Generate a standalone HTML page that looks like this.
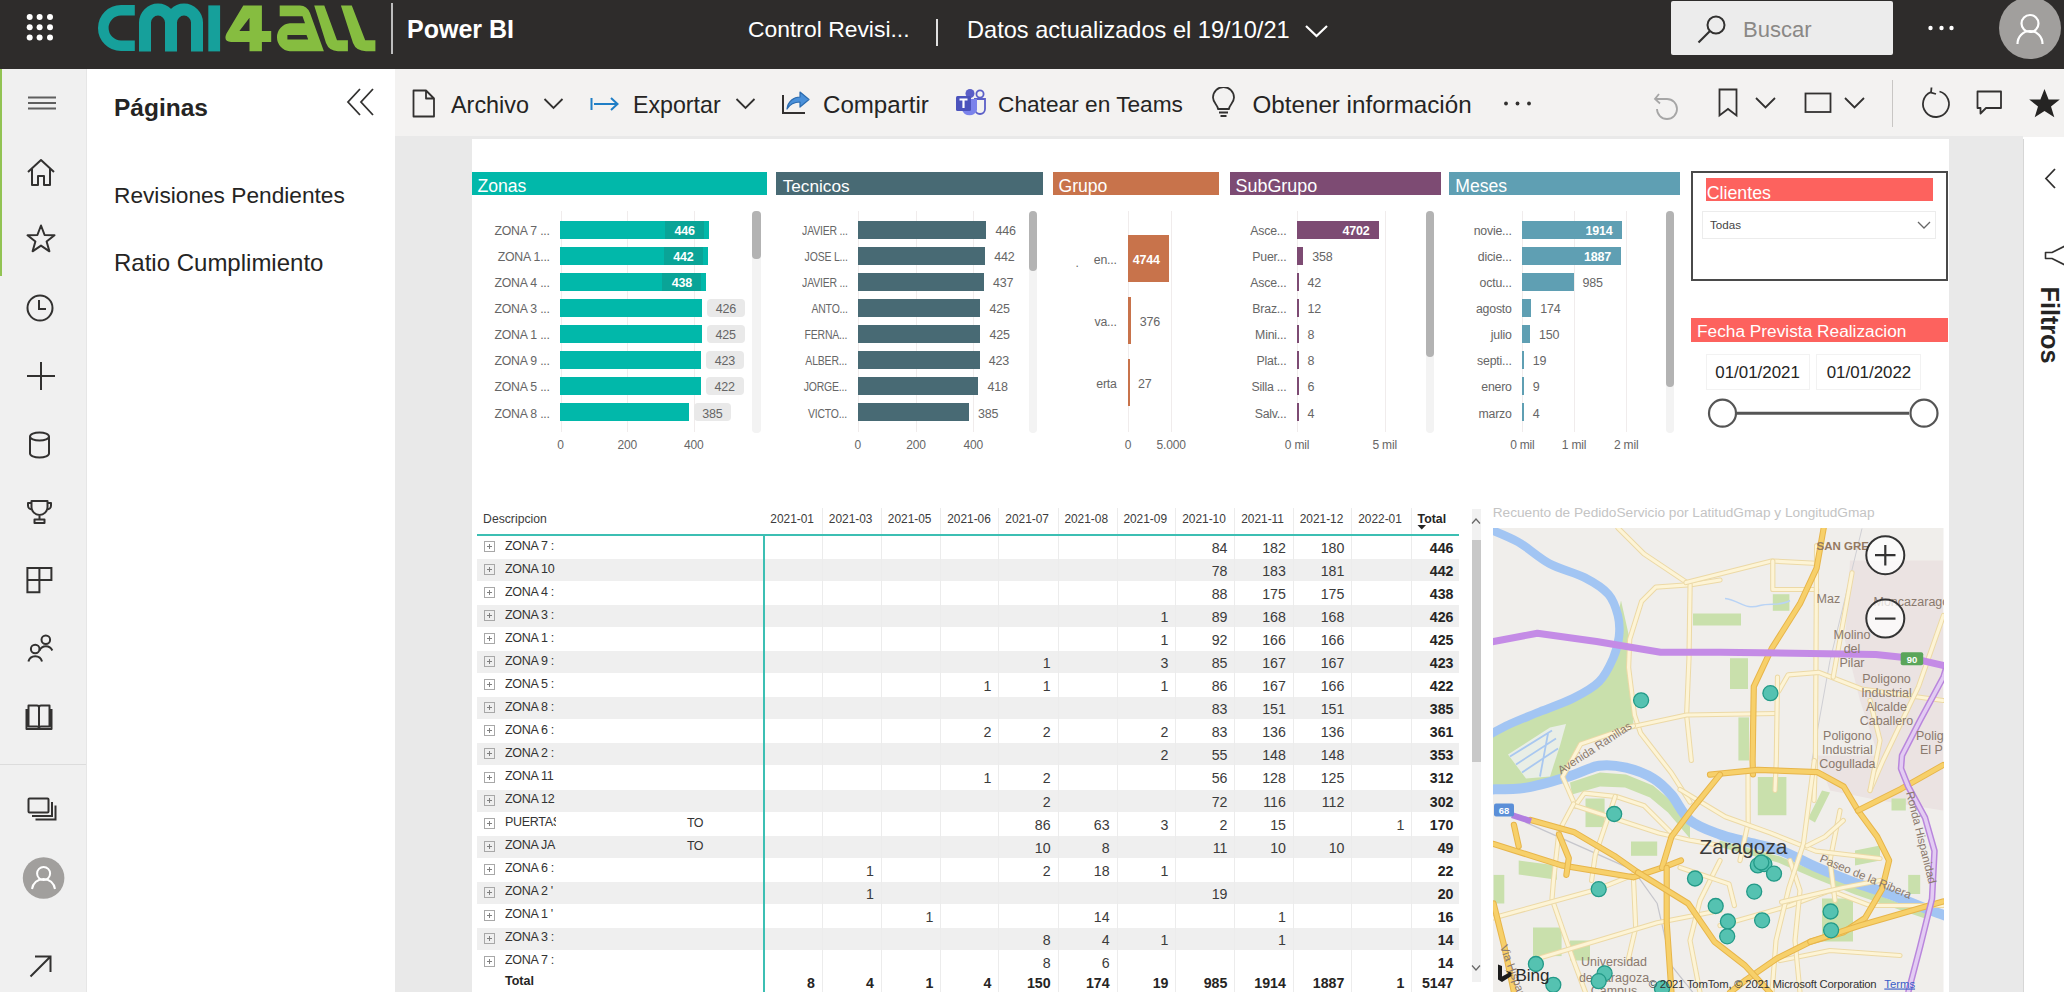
<!DOCTYPE html><html><head><meta charset="utf-8"><style>
html,body{margin:0;padding:0;width:2064px;height:992px;overflow:hidden;background:#fff;font-family:"Liberation Sans",sans-serif;}
.r{position:absolute;display:block}
.t{position:absolute;white-space:nowrap;font-family:"Liberation Sans",sans-serif;}
</style></head><body>
<div class="r" style="left:0px;top:0px;width:2064px;height:69px;background:#2e2c2b;"></div>
<svg class="r" style="left:20px;top:7px;" width="40" height="40" viewBox="0 0 40 40"><circle cx="9.7" cy="9.899999999999999" r="3" fill="#fff"/><circle cx="9.7" cy="20.2" r="3" fill="#fff"/><circle cx="9.7" cy="30.5" r="3" fill="#fff"/><circle cx="19.6" cy="9.899999999999999" r="3" fill="#fff"/><circle cx="19.6" cy="20.2" r="3" fill="#fff"/><circle cx="19.6" cy="30.5" r="3" fill="#fff"/><circle cx="30" cy="9.899999999999999" r="3" fill="#fff"/><circle cx="30" cy="20.2" r="3" fill="#fff"/><circle cx="30" cy="30.5" r="3" fill="#fff"/></svg>
<svg class="r" style="left:0px;top:0px;" width="400" height="69" viewBox="0 0 400 69">
<path d="M134.8 10.3 H121 A17.5 17.5 0 0 0 121 45.7 H134.8" fill="none" stroke="#16a09b" stroke-width="10.6"/>
<path d="M145 51.4 V22.6 A13 13 0 0 1 171 22.6 V51.4 M171 22.6 A13 13 0 0 1 197 22.6 V51.4" fill="none" stroke="#16a09b" stroke-width="12"/>
<rect x="208.3" y="5.4" width="11.8" height="46" fill="#16a09b"/>
<path d="M243.3 5.4 L261.9 5.4 L261.9 31 L271.2 31 L271.2 41.9 L261.9 41.9 L261.9 51.2 L249.5 51.2 L249.5 41.9 L231 41.9 Q223 41.5 226.5 33.5 Z M249.5 17.8 L249.5 31 L239.4 31 Z" fill="#86bd40" fill-rule="evenodd"/>
<path d="M279.7 5.4 H300 Q307 5.4 310 13 L323.9 51.2 H289.8 A14 14 0 0 1 289.8 23.3 H305 L302.5 16.3 H279.7 Z M287.4 34.9 H306.5 L308.2 39.5 H287.4 Z" fill="#86bd40" fill-rule="evenodd"/>
<path d="M314.2 5.4 L324.3 5.4 L337 40.3 L347.9 40.3 L347.9 51.2 L338 51.2 Q329 51 326 43 Z" fill="#86bd40"/>
<path d="M340.9 5.4 L351.8 5.4 L365.2 40.3 L375.4 40.3 L375.4 51.2 L366 51.2 Q356 51 353 43 Z" fill="#86bd40"/>
</svg>
<div class="r" style="left:391px;top:3px;width:2px;height:51px;background:#bdbdbd;"></div>
<div class="t" style="left:407px;top:14px;font-size:25px;line-height:30px;color:#fff;font-weight:bold;">Power BI</div>
<div class="t" style="left:748px;top:16px;font-size:22.9px;line-height:27px;color:#fff;font-weight:normal;">Control Revisi...</div>
<div class="r" style="left:936px;top:19px;width:2px;height:27px;background:#e0e0e0;"></div>
<div class="t" style="left:967px;top:16px;font-size:23.6px;line-height:28px;color:#fff;font-weight:normal;">Datos actualizados el 19/10/21</div>
<svg class="r" style="left:1303px;top:22px;" width="28" height="18" viewBox="0 0 28 18"><path d="M3 4 L13.5 14 L24 4" fill="none" stroke="#fff" stroke-width="2.2"/></svg>
<div class="r" style="left:1671px;top:1px;width:222px;height:54px;background:#ececec;border-radius:2px"></div>
<svg class="r" style="left:1694px;top:10px;" width="36" height="36" viewBox="0 0 36 36"><circle cx="22" cy="15" r="8.5" fill="none" stroke="#323130" stroke-width="2"/><path d="M16 21 L4.5 32.5" stroke="#323130" stroke-width="2.2"/></svg>
<div class="t" style="left:1743px;top:17px;font-size:22px;line-height:26px;color:#8a8886;font-weight:normal;">Buscar</div>
<svg class="r" style="left:1920px;top:20px;" width="40" height="16" viewBox="0 0 40 16"><circle cx="10.5" cy="8" r="2.2" fill="#fff"/><circle cx="21.5" cy="8" r="2.2" fill="#fff"/><circle cx="31.5" cy="8" r="2.2" fill="#fff"/></svg>
<svg class="r" style="left:1998px;top:-4px;" width="66" height="66" viewBox="0 0 66 66"><circle cx="32" cy="32" r="31" fill="#a19f9d"/><circle cx="32" cy="27.5" r="8.5" fill="none" stroke="#fff" stroke-width="2.2"/><path d="M19.5 48 A12.5 13 0 0 1 44.5 48" fill="none" stroke="#fff" stroke-width="2.2"/></svg>
<div class="r" style="left:0px;top:69px;width:86px;height:923px;background:#f0f0f0;"></div>
<div class="r" style="left:0px;top:69px;width:1.5px;height:207px;background:#92c353;"></div>
<div class="r" style="left:86px;top:69px;width:1px;height:923px;background:#e6e6e6;"></div>
<svg class="r" style="left:26px;top:94px;" width="32" height="18" viewBox="0 0 32 18"><path d="M2 3.5 H30 M2 9 H30 M2 14.5 H30" stroke="#5f5f5f" stroke-width="1.8"/></svg>
<svg class="r" style="left:24px;top:156px;" width="34" height="34" viewBox="0 0 34 34"><path d="M4 16 L17 4 L30 16 M8 12.5 V29 H14 V20 H20 V29 H26 V12.5" fill="none" stroke="#323130" stroke-width="2" stroke-linejoin="round"/></svg>
<svg class="r" style="left:24px;top:222px;" width="34" height="34" viewBox="0 0 34 34"><path d="M17 3.5 L20.6 13 L30.5 13.3 L22.6 19.5 L25.4 29.3 L17 23.6 L8.6 29.3 L11.4 19.5 L3.5 13.3 L13.4 13 Z" fill="none" stroke="#323130" stroke-width="2" stroke-linejoin="round"/></svg>
<svg class="r" style="left:24px;top:291px;" width="34" height="34" viewBox="0 0 34 34"><circle cx="16" cy="17" r="12.5" fill="none" stroke="#323130" stroke-width="2"/><path d="M15 9 V18 H22" fill="none" stroke="#323130" stroke-width="2"/></svg>
<svg class="r" style="left:24px;top:359px;" width="34" height="34" viewBox="0 0 34 34"><path d="M17 3 V31 M3 17 H31" fill="none" stroke="#323130" stroke-width="2"/></svg>
<svg class="r" style="left:24px;top:429px;" width="34" height="34" viewBox="0 0 34 34"><ellipse cx="15.5" cy="7.5" rx="9.5" ry="4" fill="none" stroke="#323130" stroke-width="2"/><path d="M6 7.5 V24.5 A9.5 4 0 0 0 25 24.5 V7.5" fill="none" stroke="#323130" stroke-width="2"/></svg>
<svg class="r" style="left:24px;top:494px;" width="34" height="34" viewBox="0 0 34 34"><path d="M7.5 7 H23.5 V13 A8 8 0 0 1 7.5 13 Z M7.5 9 H4 V11.5 A4 4 0 0 0 8 15.5 M23.5 9 H27 V11.5 A4 4 0 0 1 23 15.5 M15.5 21 V25 M10.5 25.5 H20.5 V29 H10.5 Z" fill="none" stroke="#323130" stroke-width="2" stroke-width="1.8" stroke-linejoin="round"/></svg>
<svg class="r" style="left:24px;top:563px;" width="34" height="34" viewBox="0 0 34 34"><path d="M3.4 5 H15.4 V17 H3.4 Z M15.4 5 H27.4 V17 H15.4 M3.4 17 V29.3 H15.4 V17" fill="none" stroke="#323130" stroke-width="2" stroke-width="1.9"/></svg>
<svg class="r" style="left:24px;top:631px;" width="34" height="34" viewBox="0 0 34 34"><circle cx="21.8" cy="8.8" r="4.3" fill="none" stroke="#323130" stroke-width="2" stroke-width="1.8"/><path d="M15.5 19.5 A7 7 0 0 1 28.3 19.5" fill="none" stroke="#323130" stroke-width="2" stroke-width="1.8"/><circle cx="11.2" cy="18" r="4.3" fill="none" stroke="#323130" stroke-width="2" stroke-width="1.8"/><path d="M4.4 30.5 A7 7 0 0 1 18 30.5" fill="none" stroke="#323130" stroke-width="2" stroke-width="1.8"/></svg>
<svg class="r" style="left:24px;top:700px;" width="34" height="34" viewBox="0 0 34 34"><path d="M4.5 5.5 H13 A2 2 0 0 1 15 7.5 V28 A2 2 0 0 0 13 26.5 H4.5 Z M25.5 5.5 H17 A2 2 0 0 0 15 7.5 V28 A2 2 0 0 1 17 26.5 H25.5 Z M2.5 9 V29 H27.5 V9" fill="none" stroke="#323130" stroke-width="2" stroke-width="1.8" stroke-linejoin="round"/></svg>
<div class="r" style="left:0px;top:764px;width:86px;height:1px;background:#dcdcdc;"></div>
<svg class="r" style="left:24px;top:792px;" width="36" height="34" viewBox="0 0 36 34"><rect x="4.5" y="6.5" width="20" height="14" rx="1" fill="none" stroke="#323130" stroke-width="2" stroke-width="1.8"/><path d="M8 24 H28 V10 M11.5 27.5 H31.5 V13.5" fill="none" stroke="#323130" stroke-width="2" stroke-width="1.8"/></svg>
<svg class="r" style="left:22px;top:857px;" width="44" height="44" viewBox="0 0 44 44"><circle cx="21.6" cy="21" r="20.8" fill="#a19f9d"/><circle cx="21.6" cy="16.5" r="6.5" fill="none" stroke="#fff" stroke-width="2"/><path d="M10 32 A11.6 11.6 0 0 1 33 32" fill="none" stroke="#fff" stroke-width="2"/></svg>
<svg class="r" style="left:24px;top:950px;" width="34" height="34" viewBox="0 0 34 34"><path d="M6.5 26.5 L26.5 6.5 M11 6.5 H26.5 V22" fill="none" stroke="#323130" stroke-width="2"/></svg>
<div class="r" style="left:87px;top:69px;width:308px;height:923px;background:#ffffff;"></div>
<div class="r" style="left:395px;top:69px;width:1px;height:923px;background:#dcdcdc;"></div>
<div class="t" style="left:114px;top:93px;font-size:24.5px;line-height:29px;color:#252423;font-weight:bold;">Páginas</div>
<svg class="r" style="left:342px;top:86px;" width="40" height="34" viewBox="0 0 40 34"><path d="M18 3 L6 16 L18 29 M31 3 L19 16 L31 29" fill="none" stroke="#323130" stroke-width="1.8"/></svg>
<div class="t" style="left:114px;top:182px;font-size:22.7px;line-height:27px;color:#252423;font-weight:normal;">Revisiones Pendientes</div>
<div class="t" style="left:114px;top:248px;font-size:24.0px;line-height:29px;color:#252423;font-weight:normal;">Ratio Cumplimiento</div>
<div class="r" style="left:395px;top:69px;width:1669px;height:67.5px;background:#f3f2f1;"></div>
<div class="r" style="left:395px;top:136px;width:1628px;height:856px;background:#e9e9e9;"></div>
<svg class="r" style="left:410px;top:88px;" width="28" height="32" viewBox="0 0 28 32"><path d="M3.5 2.5 H16 L24 10.5 V28.5 H3.5 Z M16 2.5 V10.5 H24" fill="none" stroke="#323130" stroke-width="1.8" stroke-linejoin="round"/></svg>
<div class="t" style="left:451px;top:91px;font-size:23.4px;line-height:28px;color:#252423;font-weight:normal;">Archivo</div>
<svg class="r" style="left:542px;top:96px;" width="24" height="16" viewBox="0 0 24 16"><path d="M2.5 3 L11.5 12 L20.5 3" fill="none" stroke="#323130" stroke-width="1.8"/></svg>
<svg class="r" style="left:588px;top:94px;" width="34" height="20" viewBox="0 0 34 20"><path d="M3.5 4 V16 M6 10 H29 M23 4 L29.5 10 L23 16" fill="none" stroke="#1f7ec6" stroke-width="2"/></svg>
<div class="t" style="left:633px;top:91px;font-size:23.2px;line-height:28px;color:#252423;font-weight:normal;">Exportar</div>
<svg class="r" style="left:734px;top:96px;" width="24" height="16" viewBox="0 0 24 16"><path d="M2.5 3 L11.5 12 L20.5 3" fill="none" stroke="#323130" stroke-width="1.8"/></svg>
<svg class="r" style="left:780px;top:87px;" width="34" height="30" viewBox="0 0 34 30"><path d="M3 8 V26 H25" fill="none" stroke="#323130" stroke-width="2"/><path d="M7 22 C8 14 14 10 20 10 V5 L29 12.5 L20 20 V15 C15 15 10 17 7 22 Z" fill="#4a90d9" stroke="#2b6cb0" stroke-width="1.2" stroke-linejoin="round"/></svg>
<div class="t" style="left:823px;top:90px;font-size:24.1px;line-height:29px;color:#252423;font-weight:normal;">Compartir</div>
<svg class="r" style="left:953px;top:87px;" width="36" height="32" viewBox="0 0 36 32"><circle cx="27" cy="7" r="3.6" fill="none" stroke="#5b5fc7" stroke-width="1.8"/><path d="M21 12 H32 V22 A5 5 0 0 1 22 22" fill="none" stroke="#5b5fc7" stroke-width="1.8"/><circle cx="17" cy="6.5" r="4.5" fill="#5b5fc7"/><path d="M9 12 H24 V23 A8 8 0 0 1 9 23 Z" fill="#7b83eb"/><rect x="3" y="9" width="15" height="15" rx="1.5" fill="#4b53bc"/><path d="M6.5 12.5 H14.5 M10.5 12.5 V21" stroke="#fff" stroke-width="2.2"/></svg>
<div class="t" style="left:998px;top:91px;font-size:22.7px;line-height:27px;color:#252423;font-weight:normal;">Chatear en Teams</div>
<svg class="r" style="left:1208px;top:87px;" width="32" height="32" viewBox="0 0 32 32"><path d="M10 22 C10 18 5 16 5 10.5 A10.5 10.5 0 0 1 26 10.5 C26 16 21 18 21 22 Z M11 25.5 H20 M12.5 29 H18.5" fill="none" stroke="#323130" stroke-width="1.8" stroke-linejoin="round"/></svg>
<div class="t" style="left:1252.5px;top:90px;font-size:24.2px;line-height:29px;color:#252423;font-weight:normal;">Obtener información</div>
<svg class="r" style="left:1500px;top:96px;" width="36" height="16" viewBox="0 0 36 16"><circle cx="6" cy="7.5" r="1.9" fill="#323130"/><circle cx="17.5" cy="7.5" r="1.9" fill="#323130"/><circle cx="29" cy="7.5" r="1.9" fill="#323130"/></svg>
<svg class="r" style="left:1650px;top:88px;" width="34" height="32" viewBox="0 0 34 32"><path d="M9 6 L5 11 L10 15.5 M5.5 11 H17 A10 10 0 1 1 7 21" fill="none" stroke="#a6a6a6" stroke-width="1.8"/></svg>
<svg class="r" style="left:1715px;top:86px;" width="26" height="34" viewBox="0 0 26 34"><path d="M4.5 3.5 H21.5 V29.5 L13 23 L4.5 29.5 Z" fill="none" stroke="#323130" stroke-width="1.8" stroke-width="2.2" stroke-linejoin="miter"/></svg>
<svg class="r" style="left:1753px;top:94px;" width="26" height="18" viewBox="0 0 26 18"><path d="M3 4 L12.5 13.5 L22 4" fill="none" stroke="#323130" stroke-width="1.8"/></svg>
<svg class="r" style="left:1802px;top:90px;" width="32" height="26" viewBox="0 0 32 26"><rect x="3.5" y="3.5" width="25" height="18.5" fill="none" stroke="#323130" stroke-width="1.8" stroke-width="2.2"/></svg>
<svg class="r" style="left:1842px;top:94px;" width="26" height="18" viewBox="0 0 26 18"><path d="M3 4 L12.5 13.5 L22 4" fill="none" stroke="#323130" stroke-width="1.8"/></svg>
<div class="r" style="left:1892px;top:80px;width:1px;height:47px;background:#c8c6c4;"></div>
<svg class="r" style="left:1918px;top:86px;" width="34" height="34" viewBox="0 0 34 34"><path d="M13 6 A13 13 0 1 0 21.5 5.5 M13.5 1.5 L13 6.5 L18 8" fill="none" stroke="#323130" stroke-width="1.8" stroke-width="2"/></svg>
<svg class="r" style="left:1974px;top:88px;" width="32" height="30" viewBox="0 0 32 30"><path d="M3.5 3.5 H27 V20 H12 L6.5 25.5 V20 H3.5 Z" fill="none" stroke="#323130" stroke-width="1.8" stroke-linejoin="round"/></svg>
<svg class="r" style="left:2027px;top:87px;" width="37" height="32" viewBox="0 0 37 32"><path d="M17.5 2 L21.6 12.4 L32.8 12.6 L24 19.5 L27.3 30.3 L17.5 24 L7.7 30.3 L11 19.5 L2.2 12.6 L13.4 12.4 Z" fill="#252423"/></svg>
<div class="r" style="left:472px;top:138.5px;width:1476.5px;height:854px;background:#ffffff;"></div>
<div class="r" style="left:2023px;top:138.5px;width:41px;height:854px;background:#ffffff;"></div>
<div class="r" style="left:2022.5px;top:138.5px;width:1px;height:854px;background:#d6d6d6;"></div>
<svg class="r" style="left:2040px;top:165px;" width="22" height="28" viewBox="0 0 22 28"><path d="M15 4 L6 13.5 L15 23" fill="none" stroke="#323130" stroke-width="1.8"/></svg>
<svg class="r" style="left:2040px;top:240px;" width="24" height="30" viewBox="0 0 24 30"><path d="M25 6 L12 12.5 H5.5 V18.5 H12 L25 25" fill="none" stroke="#323130" stroke-width="1.6" stroke-linejoin="round"/></svg>
<div class="t" style="left:2050px;top:324.5px;transform:translate(-50%,-50%) rotate(90deg);font-size:25.2px;font-weight:bold;color:#252423;line-height:28px">Filtros</div>
<div class="r" style="left:472px;top:172px;width:295px;height:23px;background:#01b8aa;"></div>
<div class="t" style="left:477.4px;top:176px;font-size:17.6px;line-height:21px;color:#ffffff;font-weight:normal;">Zonas</div>
<div class="r" style="left:561px;top:211px;width:1px;height:221px;background:#f0ecec;"></div>
<div class="r" style="left:627px;top:211px;width:1px;height:221px;background:#f0ecec;"></div>
<div class="r" style="left:694px;top:211px;width:1px;height:221px;background:#f0ecec;"></div>
<div class="r" style="left:560.4px;top:220.5px;width:148.741px;height:18px;background:#01b8aa;"></div>
<div class="t" style="right:1514.2px;top:224px;font-size:12.3px;line-height:15px;color:#666666;font-weight:normal;text-align:right;letter-spacing:-0.2px;">ZONA 7 ...</div>
<div class="r" style="left:665.141px;top:220.5px;width:39px;height:18px;background:#0aa497;"></div>
<div class="t" style="left:584.641px;width:200px;text-align:center;top:224px;font-size:12.5px;line-height:15px;color:#ffffff;font-weight:bold;letter-spacing:-0.2px;">446</div>
<div class="r" style="left:560.4px;top:246.6px;width:147.407px;height:18px;background:#01b8aa;"></div>
<div class="t" style="right:1514.2px;top:250px;font-size:12.3px;line-height:15px;color:#666666;font-weight:normal;text-align:right;letter-spacing:-0.2px;">ZONA 1...</div>
<div class="r" style="left:663.807px;top:246.6px;width:39px;height:18px;background:#0aa497;"></div>
<div class="t" style="left:583.307px;width:200px;text-align:center;top:250px;font-size:12.5px;line-height:15px;color:#ffffff;font-weight:bold;letter-spacing:-0.2px;">442</div>
<div class="r" style="left:560.4px;top:272.7px;width:146.073px;height:18px;background:#01b8aa;"></div>
<div class="t" style="right:1514.2px;top:276px;font-size:12.3px;line-height:15px;color:#666666;font-weight:normal;text-align:right;letter-spacing:-0.2px;">ZONA 4 ...</div>
<div class="r" style="left:662.473px;top:272.7px;width:39px;height:18px;background:#0aa497;"></div>
<div class="t" style="left:581.973px;width:200px;text-align:center;top:276px;font-size:12.5px;line-height:15px;color:#ffffff;font-weight:bold;letter-spacing:-0.2px;">438</div>
<div class="r" style="left:560.4px;top:298.8px;width:142.071px;height:18px;background:#01b8aa;"></div>
<div class="t" style="right:1514.2px;top:302px;font-size:12.3px;line-height:15px;color:#666666;font-weight:normal;text-align:right;letter-spacing:-0.2px;">ZONA 3 ...</div>
<div class="r" style="left:707.471px;top:298.8px;width:37.5px;height:18px;background:#e9e9e9;border-radius:4px"></div>
<div class="t" style="left:625.971px;width:200px;text-align:center;top:302px;font-size:12.5px;line-height:15px;color:#666666;font-weight:normal;letter-spacing:-0.2px;">426</div>
<div class="r" style="left:560.4px;top:324.9px;width:141.7375px;height:18px;background:#01b8aa;"></div>
<div class="t" style="right:1514.2px;top:328px;font-size:12.3px;line-height:15px;color:#666666;font-weight:normal;text-align:right;letter-spacing:-0.2px;">ZONA 1 ...</div>
<div class="r" style="left:707.1375px;top:324.9px;width:37.5px;height:18px;background:#e9e9e9;border-radius:4px"></div>
<div class="t" style="left:625.6375px;width:200px;text-align:center;top:328px;font-size:12.5px;line-height:15px;color:#666666;font-weight:normal;letter-spacing:-0.2px;">425</div>
<div class="r" style="left:560.4px;top:351.0px;width:141.0705px;height:18px;background:#01b8aa;"></div>
<div class="t" style="right:1514.2px;top:354px;font-size:12.3px;line-height:15px;color:#666666;font-weight:normal;text-align:right;letter-spacing:-0.2px;">ZONA 9 ...</div>
<div class="r" style="left:706.4705px;top:351.0px;width:37.5px;height:18px;background:#e9e9e9;border-radius:4px"></div>
<div class="t" style="left:624.9705px;width:200px;text-align:center;top:354px;font-size:12.5px;line-height:15px;color:#666666;font-weight:normal;letter-spacing:-0.2px;">423</div>
<div class="r" style="left:560.4px;top:377.1px;width:140.737px;height:18px;background:#01b8aa;"></div>
<div class="t" style="right:1514.2px;top:380px;font-size:12.3px;line-height:15px;color:#666666;font-weight:normal;text-align:right;letter-spacing:-0.2px;">ZONA 5 ...</div>
<div class="r" style="left:706.137px;top:377.1px;width:37.5px;height:18px;background:#e9e9e9;border-radius:4px"></div>
<div class="t" style="left:624.637px;width:200px;text-align:center;top:380px;font-size:12.5px;line-height:15px;color:#666666;font-weight:normal;letter-spacing:-0.2px;">422</div>
<div class="r" style="left:560.4px;top:403.20000000000005px;width:128.3975px;height:18px;background:#01b8aa;"></div>
<div class="t" style="right:1514.2px;top:407px;font-size:12.3px;line-height:15px;color:#666666;font-weight:normal;text-align:right;letter-spacing:-0.2px;">ZONA 8 ...</div>
<div class="r" style="left:693.7975px;top:403.20000000000005px;width:37.5px;height:18px;background:#e9e9e9;border-radius:4px"></div>
<div class="t" style="left:612.2975px;width:200px;text-align:center;top:407px;font-size:12.5px;line-height:15px;color:#666666;font-weight:normal;letter-spacing:-0.2px;">385</div>
<div class="t" style="left:460.4px;width:200px;text-align:center;top:438px;font-size:12px;line-height:14px;color:#666666;font-weight:normal;letter-spacing:-0.2px;">0</div>
<div class="t" style="left:527.3px;width:200px;text-align:center;top:438px;font-size:12px;line-height:14px;color:#666666;font-weight:normal;letter-spacing:-0.2px;">200</div>
<div class="t" style="left:593.8px;width:200px;text-align:center;top:438px;font-size:12px;line-height:14px;color:#666666;font-weight:normal;letter-spacing:-0.2px;">400</div>
<div class="r" style="left:752px;top:211px;width:9px;height:222px;background:#f3f3f3;border-radius:4px"></div>
<div class="r" style="left:752px;top:211px;width:9px;height:48px;background:#b3b3b3;border-radius:4px"></div>
<div class="r" style="left:776px;top:172px;width:267px;height:23px;background:#486a74;"></div>
<div class="t" style="left:782.7px;top:176px;font-size:17.2px;line-height:21px;color:#ffffff;font-weight:normal;">Tecnicos</div>
<div class="r" style="left:858px;top:211px;width:1px;height:221px;background:#f0ecec;"></div>
<div class="r" style="left:916px;top:211px;width:1px;height:221px;background:#f0ecec;"></div>
<div class="r" style="left:973px;top:211px;width:1px;height:221px;background:#f0ecec;"></div>
<div class="r" style="left:857.7px;top:220.5px;width:128.8048px;height:18px;background:#486a74;"></div>
<div class="t" style="right:1216.6px;top:224px;font-size:12.3px;line-height:15px;color:#666666;font-weight:normal;text-align:right;letter-spacing:-0.2px;transform:scaleX(0.85);transform-origin:right center;">JAVIER ...</div>
<div class="t" style="left:995.5048px;top:224px;font-size:12.5px;line-height:15px;color:#666666;font-weight:normal;letter-spacing:-0.2px;">446</div>
<div class="r" style="left:857.7px;top:246.6px;width:127.6496px;height:18px;background:#486a74;"></div>
<div class="t" style="right:1216.6px;top:250px;font-size:12.3px;line-height:15px;color:#666666;font-weight:normal;text-align:right;letter-spacing:-0.2px;transform:scaleX(0.85);transform-origin:right center;">JOSE L...</div>
<div class="t" style="left:994.3496px;top:250px;font-size:12.5px;line-height:15px;color:#666666;font-weight:normal;letter-spacing:-0.2px;">442</div>
<div class="r" style="left:857.7px;top:272.7px;width:126.2056px;height:18px;background:#486a74;"></div>
<div class="t" style="right:1216.6px;top:276px;font-size:12.3px;line-height:15px;color:#666666;font-weight:normal;text-align:right;letter-spacing:-0.2px;transform:scaleX(0.85);transform-origin:right center;">JAVIER ...</div>
<div class="t" style="left:992.9056px;top:276px;font-size:12.5px;line-height:15px;color:#666666;font-weight:normal;letter-spacing:-0.2px;">437</div>
<div class="r" style="left:857.7px;top:298.8px;width:122.74px;height:18px;background:#486a74;"></div>
<div class="t" style="right:1216.6px;top:302px;font-size:12.3px;line-height:15px;color:#666666;font-weight:normal;text-align:right;letter-spacing:-0.2px;transform:scaleX(0.85);transform-origin:right center;">ANTO...</div>
<div class="t" style="left:989.44px;top:302px;font-size:12.5px;line-height:15px;color:#666666;font-weight:normal;letter-spacing:-0.2px;">425</div>
<div class="r" style="left:857.7px;top:324.9px;width:122.74px;height:18px;background:#486a74;"></div>
<div class="t" style="right:1216.6px;top:328px;font-size:12.3px;line-height:15px;color:#666666;font-weight:normal;text-align:right;letter-spacing:-0.2px;transform:scaleX(0.85);transform-origin:right center;">FERNA...</div>
<div class="t" style="left:989.44px;top:328px;font-size:12.5px;line-height:15px;color:#666666;font-weight:normal;letter-spacing:-0.2px;">425</div>
<div class="r" style="left:857.7px;top:351.0px;width:122.1624px;height:18px;background:#486a74;"></div>
<div class="t" style="right:1216.6px;top:354px;font-size:12.3px;line-height:15px;color:#666666;font-weight:normal;text-align:right;letter-spacing:-0.2px;transform:scaleX(0.85);transform-origin:right center;">ALBER...</div>
<div class="t" style="left:988.8624000000001px;top:354px;font-size:12.5px;line-height:15px;color:#666666;font-weight:normal;letter-spacing:-0.2px;">423</div>
<div class="r" style="left:857.7px;top:377.1px;width:120.7184px;height:18px;background:#486a74;"></div>
<div class="t" style="right:1216.6px;top:380px;font-size:12.3px;line-height:15px;color:#666666;font-weight:normal;text-align:right;letter-spacing:-0.2px;transform:scaleX(0.85);transform-origin:right center;">JORGE...</div>
<div class="t" style="left:987.4184px;top:380px;font-size:12.5px;line-height:15px;color:#666666;font-weight:normal;letter-spacing:-0.2px;">418</div>
<div class="r" style="left:857.7px;top:403.20000000000005px;width:111.188px;height:18px;background:#486a74;"></div>
<div class="t" style="right:1216.6px;top:407px;font-size:12.3px;line-height:15px;color:#666666;font-weight:normal;text-align:right;letter-spacing:-0.2px;transform:scaleX(0.85);transform-origin:right center;">VICTO...</div>
<div class="t" style="left:977.888px;top:407px;font-size:12.5px;line-height:15px;color:#666666;font-weight:normal;letter-spacing:-0.2px;">385</div>
<div class="t" style="left:757.7px;width:200px;text-align:center;top:438px;font-size:12px;line-height:14px;color:#666666;font-weight:normal;letter-spacing:-0.2px;">0</div>
<div class="t" style="left:816px;width:200px;text-align:center;top:438px;font-size:12px;line-height:14px;color:#666666;font-weight:normal;letter-spacing:-0.2px;">200</div>
<div class="t" style="left:873.2px;width:200px;text-align:center;top:438px;font-size:12px;line-height:14px;color:#666666;font-weight:normal;letter-spacing:-0.2px;">400</div>
<div class="r" style="left:1029px;top:211px;width:8px;height:222px;background:#f3f3f3;border-radius:4px"></div>
<div class="r" style="left:1029px;top:211px;width:8px;height:60px;background:#b3b3b3;border-radius:4px"></div>
<div class="r" style="left:1053px;top:172px;width:166px;height:23px;background:#c8734b;"></div>
<div class="t" style="left:1058.5px;top:176px;font-size:17.6px;line-height:21px;color:#ffffff;font-weight:normal;">Grupo</div>
<div class="r" style="left:1128px;top:211px;width:1px;height:221px;background:#f0ecec;"></div>
<div class="r" style="left:1171px;top:211px;width:1px;height:221px;background:#f0ecec;"></div>
<div class="r" style="left:1128px;top:235.2px;width:40.89328px;height:46.5px;background:#c8734b;"></div>
<div class="t" style="right:947.3px;top:253px;font-size:12.3px;line-height:15px;color:#666666;font-weight:normal;text-align:right;letter-spacing:-0.2px;">en...</div>
<div class="t" style="left:1132.7px;top:253px;font-size:12.5px;line-height:15px;color:#ffffff;font-weight:bold;letter-spacing:-0.2px;">4744</div>
<div class="r" style="left:1128px;top:297px;width:3.2411199999999996px;height:46.5px;background:#c8734b;"></div>
<div class="t" style="right:947.3px;top:315px;font-size:12.3px;line-height:15px;color:#666666;font-weight:normal;text-align:right;letter-spacing:-0.2px;">va...</div>
<div class="t" style="left:1139.74112px;top:315px;font-size:12.5px;line-height:15px;color:#666666;font-weight:normal;letter-spacing:-0.2px;">376</div>
<div class="r" style="left:1128px;top:359px;width:1.5px;height:46.5px;background:#c8734b;"></div>
<div class="t" style="right:947.3px;top:377px;font-size:12.3px;line-height:15px;color:#666666;font-weight:normal;text-align:right;letter-spacing:-0.2px;">erta</div>
<div class="t" style="left:1138.0px;top:377px;font-size:12.5px;line-height:15px;color:#666666;font-weight:normal;letter-spacing:-0.2px;">27</div>
<div class="t" style="left:1075.5px;top:256px;font-size:12px;line-height:14px;color:#666666;font-weight:normal;">.</div>
<div class="t" style="left:1028px;width:200px;text-align:center;top:438px;font-size:12px;line-height:14px;color:#666666;font-weight:normal;letter-spacing:-0.2px;">0</div>
<div class="t" style="left:1071.1px;width:200px;text-align:center;top:438px;font-size:12px;line-height:14px;color:#666666;font-weight:normal;letter-spacing:-0.2px;">5.000</div>
<div class="r" style="left:1229.5px;top:172px;width:211.5px;height:23px;background:#7d4b73;"></div>
<div class="t" style="left:1235.6px;top:176px;font-size:17.9px;line-height:21px;color:#ffffff;font-weight:normal;">SubGrupo</div>
<div class="r" style="left:1297px;top:211px;width:1px;height:221px;background:#f0ecec;"></div>
<div class="r" style="left:1385px;top:211px;width:1px;height:221px;background:#f0ecec;"></div>
<div class="r" style="left:1297px;top:220.5px;width:82.00288px;height:18px;background:#7d4b73;"></div>
<div class="t" style="right:777.5px;top:224px;font-size:12.3px;line-height:15px;color:#666666;font-weight:normal;text-align:right;letter-spacing:-0.2px;">Asce...</div>
<div class="t" style="right:694.49712px;top:224px;font-size:12.5px;line-height:15px;color:#ffffff;font-weight:bold;text-align:right;letter-spacing:-0.2px;">4702</div>
<div class="r" style="left:1297px;top:246.6px;width:6.24352px;height:18px;background:#7d4b73;"></div>
<div class="t" style="right:777.5px;top:250px;font-size:12.3px;line-height:15px;color:#666666;font-weight:normal;text-align:right;letter-spacing:-0.2px;">Puer...</div>
<div class="t" style="left:1312.24352px;top:250px;font-size:12.5px;line-height:15px;color:#666666;font-weight:normal;letter-spacing:-0.2px;">358</div>
<div class="r" style="left:1297px;top:272.7px;width:1.5px;height:18px;background:#7d4b73;"></div>
<div class="t" style="right:777.5px;top:276px;font-size:12.3px;line-height:15px;color:#666666;font-weight:normal;text-align:right;letter-spacing:-0.2px;">Asce...</div>
<div class="t" style="left:1307.5px;top:276px;font-size:12.5px;line-height:15px;color:#666666;font-weight:normal;letter-spacing:-0.2px;">42</div>
<div class="r" style="left:1297px;top:298.8px;width:1.5px;height:18px;background:#7d4b73;"></div>
<div class="t" style="right:777.5px;top:302px;font-size:12.3px;line-height:15px;color:#666666;font-weight:normal;text-align:right;letter-spacing:-0.2px;">Braz...</div>
<div class="t" style="left:1307.5px;top:302px;font-size:12.5px;line-height:15px;color:#666666;font-weight:normal;letter-spacing:-0.2px;">12</div>
<div class="r" style="left:1297px;top:324.9px;width:1.5px;height:18px;background:#7d4b73;"></div>
<div class="t" style="right:777.5px;top:328px;font-size:12.3px;line-height:15px;color:#666666;font-weight:normal;text-align:right;letter-spacing:-0.2px;">Mini...</div>
<div class="t" style="left:1307.5px;top:328px;font-size:12.5px;line-height:15px;color:#666666;font-weight:normal;letter-spacing:-0.2px;">8</div>
<div class="r" style="left:1297px;top:351.0px;width:1.5px;height:18px;background:#7d4b73;"></div>
<div class="t" style="right:777.5px;top:354px;font-size:12.3px;line-height:15px;color:#666666;font-weight:normal;text-align:right;letter-spacing:-0.2px;">Plat...</div>
<div class="t" style="left:1307.5px;top:354px;font-size:12.5px;line-height:15px;color:#666666;font-weight:normal;letter-spacing:-0.2px;">8</div>
<div class="r" style="left:1297px;top:377.1px;width:1.5px;height:18px;background:#7d4b73;"></div>
<div class="t" style="right:777.5px;top:380px;font-size:12.3px;line-height:15px;color:#666666;font-weight:normal;text-align:right;letter-spacing:-0.2px;">Silla ...</div>
<div class="t" style="left:1307.5px;top:380px;font-size:12.5px;line-height:15px;color:#666666;font-weight:normal;letter-spacing:-0.2px;">6</div>
<div class="r" style="left:1297px;top:403.20000000000005px;width:1.5px;height:18px;background:#7d4b73;"></div>
<div class="t" style="right:777.5px;top:407px;font-size:12.3px;line-height:15px;color:#666666;font-weight:normal;text-align:right;letter-spacing:-0.2px;">Salv...</div>
<div class="t" style="left:1307.5px;top:407px;font-size:12.5px;line-height:15px;color:#666666;font-weight:normal;letter-spacing:-0.2px;">4</div>
<div class="t" style="left:1197px;width:200px;text-align:center;top:438px;font-size:12px;line-height:14px;color:#666666;font-weight:normal;letter-spacing:-0.2px;">0 mil</div>
<div class="t" style="left:1284.7px;width:200px;text-align:center;top:438px;font-size:12px;line-height:14px;color:#666666;font-weight:normal;letter-spacing:-0.2px;">5 mil</div>
<div class="r" style="left:1426px;top:211px;width:8px;height:222px;background:#f3f3f3;border-radius:4px"></div>
<div class="r" style="left:1426px;top:211px;width:8px;height:146px;background:#b3b3b3;border-radius:4px"></div>
<div class="r" style="left:1449.3px;top:172px;width:231.20000000000005px;height:23px;background:#5f9fb3;"></div>
<div class="t" style="left:1455.3px;top:176px;font-size:17.6px;line-height:21px;color:#ffffff;font-weight:normal;">Meses</div>
<div class="r" style="left:1522px;top:211px;width:1px;height:221px;background:#f0ecec;"></div>
<div class="r" style="left:1574px;top:211px;width:1px;height:221px;background:#f0ecec;"></div>
<div class="r" style="left:1626px;top:211px;width:1px;height:221px;background:#f0ecec;"></div>
<div class="r" style="left:1522.3px;top:220.5px;width:99.6237px;height:18px;background:#5f9fb3;"></div>
<div class="t" style="right:552.3px;top:224px;font-size:12.3px;line-height:15px;color:#666666;font-weight:normal;text-align:right;letter-spacing:-0.2px;">novie...</div>
<div class="t" style="right:451.57629999999995px;top:224px;font-size:12.5px;line-height:15px;color:#ffffff;font-weight:bold;text-align:right;letter-spacing:-0.2px;">1914</div>
<div class="r" style="left:1522.3px;top:246.6px;width:98.21835px;height:18px;background:#5f9fb3;"></div>
<div class="t" style="right:552.3px;top:250px;font-size:12.3px;line-height:15px;color:#666666;font-weight:normal;text-align:right;letter-spacing:-0.2px;">dicie...</div>
<div class="t" style="right:452.98164999999995px;top:250px;font-size:12.5px;line-height:15px;color:#ffffff;font-weight:bold;text-align:right;letter-spacing:-0.2px;">1887</div>
<div class="r" style="left:1522.3px;top:272.7px;width:51.26925px;height:18px;background:#5f9fb3;"></div>
<div class="t" style="right:552.3px;top:276px;font-size:12.3px;line-height:15px;color:#666666;font-weight:normal;text-align:right;letter-spacing:-0.2px;">octu...</div>
<div class="t" style="left:1582.56925px;top:276px;font-size:12.5px;line-height:15px;color:#666666;font-weight:normal;letter-spacing:-0.2px;">985</div>
<div class="r" style="left:1522.3px;top:298.8px;width:9.0567px;height:18px;background:#5f9fb3;"></div>
<div class="t" style="right:552.3px;top:302px;font-size:12.3px;line-height:15px;color:#666666;font-weight:normal;text-align:right;letter-spacing:-0.2px;">agosto</div>
<div class="t" style="left:1540.3567px;top:302px;font-size:12.5px;line-height:15px;color:#666666;font-weight:normal;letter-spacing:-0.2px;">174</div>
<div class="r" style="left:1522.3px;top:324.9px;width:7.8075px;height:18px;background:#5f9fb3;"></div>
<div class="t" style="right:552.3px;top:328px;font-size:12.3px;line-height:15px;color:#666666;font-weight:normal;text-align:right;letter-spacing:-0.2px;">julio</div>
<div class="t" style="left:1539.1074999999998px;top:328px;font-size:12.5px;line-height:15px;color:#666666;font-weight:normal;letter-spacing:-0.2px;">150</div>
<div class="r" style="left:1522.3px;top:351.0px;width:1.5px;height:18px;background:#5f9fb3;"></div>
<div class="t" style="right:552.3px;top:354px;font-size:12.3px;line-height:15px;color:#666666;font-weight:normal;text-align:right;letter-spacing:-0.2px;">septi...</div>
<div class="t" style="left:1532.8px;top:354px;font-size:12.5px;line-height:15px;color:#666666;font-weight:normal;letter-spacing:-0.2px;">19</div>
<div class="r" style="left:1522.3px;top:377.1px;width:1.5px;height:18px;background:#5f9fb3;"></div>
<div class="t" style="right:552.3px;top:380px;font-size:12.3px;line-height:15px;color:#666666;font-weight:normal;text-align:right;letter-spacing:-0.2px;">enero</div>
<div class="t" style="left:1532.8px;top:380px;font-size:12.5px;line-height:15px;color:#666666;font-weight:normal;letter-spacing:-0.2px;">9</div>
<div class="r" style="left:1522.3px;top:403.20000000000005px;width:1.5px;height:18px;background:#5f9fb3;"></div>
<div class="t" style="right:552.3px;top:407px;font-size:12.3px;line-height:15px;color:#666666;font-weight:normal;text-align:right;letter-spacing:-0.2px;">marzo</div>
<div class="t" style="left:1532.8px;top:407px;font-size:12.5px;line-height:15px;color:#666666;font-weight:normal;letter-spacing:-0.2px;">4</div>
<div class="t" style="left:1422.3px;width:200px;text-align:center;top:438px;font-size:12px;line-height:14px;color:#666666;font-weight:normal;letter-spacing:-0.2px;">0 mil</div>
<div class="t" style="left:1474px;width:200px;text-align:center;top:438px;font-size:12px;line-height:14px;color:#666666;font-weight:normal;letter-spacing:-0.2px;">1 mil</div>
<div class="t" style="left:1526.2px;width:200px;text-align:center;top:438px;font-size:12px;line-height:14px;color:#666666;font-weight:normal;letter-spacing:-0.2px;">2 mil</div>
<div class="r" style="left:1666px;top:211px;width:7.5px;height:222px;background:#f3f3f3;border-radius:4px"></div>
<div class="r" style="left:1666px;top:211px;width:7.5px;height:176px;background:#b3b3b3;border-radius:4px"></div>
<div class="r" style="left:1691px;top:171px;width:257px;height:110px;background:#ffffff;border:2px solid #4a4a4a;box-sizing:border-box"></div>
<div class="r" style="left:1705.7px;top:178px;width:227px;height:23.3px;background:#fd625e;"></div>
<div class="t" style="left:1706.7px;top:183px;font-size:17.8px;line-height:21px;color:#ffffff;font-weight:normal;">Clientes</div>
<div class="r" style="left:1702px;top:210.6px;width:234.4px;height:28.4px;background:#ffffff;border:1px solid #ececec;box-sizing:border-box"></div>
<div class="t" style="left:1710px;top:218px;font-size:11.6px;line-height:14px;color:#444;font-weight:normal;">Todas</div>
<svg class="r" style="left:1915px;top:219px;" width="18" height="12" viewBox="0 0 18 12"><path d="M3 3 L9 9 L15 3" fill="none" stroke="#666" stroke-width="1.3"/></svg>
<div class="r" style="left:1691.3px;top:318px;width:257px;height:24px;background:#fd625e;"></div>
<div class="t" style="left:1697px;top:321px;font-size:17.3px;line-height:21px;color:#ffffff;font-weight:normal;">Fecha Prevista Realizacion</div>
<div class="r" style="left:1705.7px;top:353.5px;width:104px;height:36px;background:#ffffff;border:1px solid #f2f2f2;box-sizing:border-box"></div>
<div class="r" style="left:1816.4px;top:353.5px;width:104.6px;height:36px;background:#ffffff;border:1px solid #f2f2f2;box-sizing:border-box"></div>
<div class="t" style="left:1715.3px;top:363px;font-size:16.9px;line-height:20px;color:#252423;font-weight:normal;">01/01/2021</div>
<div class="t" style="left:1826.7px;top:363px;font-size:16.9px;line-height:20px;color:#252423;font-weight:normal;">01/01/2022</div>
<svg class="r" style="left:1700px;top:395px;" width="250" height="40" viewBox="0 0 250 40"><path d="M37 18.2 H209" stroke="#555" stroke-width="3"/><circle cx="22.5" cy="18.2" r="13.5" fill="#fff" stroke="#555" stroke-width="2.2"/><circle cx="224" cy="18.2" r="13.5" fill="#fff" stroke="#555" stroke-width="2.2"/></svg>
<div class="r" style="left:477px;top:559.05px;width:982px;height:22px;background:#efefef;"></div>
<div class="r" style="left:477px;top:605.15px;width:982px;height:22px;background:#efefef;"></div>
<div class="r" style="left:477px;top:651.25px;width:982px;height:22px;background:#efefef;"></div>
<div class="r" style="left:477px;top:697.35px;width:982px;height:22px;background:#efefef;"></div>
<div class="r" style="left:477px;top:743.45px;width:982px;height:22px;background:#efefef;"></div>
<div class="r" style="left:477px;top:789.55px;width:982px;height:22px;background:#efefef;"></div>
<div class="r" style="left:477px;top:835.6500000000001px;width:982px;height:22px;background:#efefef;"></div>
<div class="r" style="left:477px;top:881.75px;width:982px;height:22px;background:#efefef;"></div>
<div class="r" style="left:477px;top:927.85px;width:982px;height:22px;background:#efefef;"></div>
<div class="r" style="left:822px;top:508px;width:1px;height:484px;background:#ececec;"></div>
<div class="r" style="left:881px;top:508px;width:1px;height:484px;background:#ececec;"></div>
<div class="r" style="left:940px;top:508px;width:1px;height:484px;background:#ececec;"></div>
<div class="r" style="left:998px;top:508px;width:1px;height:484px;background:#ececec;"></div>
<div class="r" style="left:1058px;top:508px;width:1px;height:484px;background:#ececec;"></div>
<div class="r" style="left:1117px;top:508px;width:1px;height:484px;background:#ececec;"></div>
<div class="r" style="left:1175px;top:508px;width:1px;height:484px;background:#ececec;"></div>
<div class="r" style="left:1234px;top:508px;width:1px;height:484px;background:#ececec;"></div>
<div class="r" style="left:1293px;top:508px;width:1px;height:484px;background:#ececec;"></div>
<div class="r" style="left:1351px;top:508px;width:1px;height:484px;background:#ececec;"></div>
<div class="r" style="left:1411px;top:508px;width:1px;height:484px;background:#ececec;"></div>
<div class="r" style="left:477px;top:533.5px;width:982px;height:2px;background:#3cbfb3;"></div>
<div class="r" style="left:763px;top:535px;width:2px;height:457px;background:#3cbfb3;"></div>
<div class="t" style="left:483.1px;top:512px;font-size:12.2px;line-height:15px;color:#3b3b3b;font-weight:normal;">Descripcion</div>
<div class="t" style="left:770.3px;top:512px;font-size:11.9px;line-height:14px;color:#3b3b3b;font-weight:normal;">2021-01</div>
<div class="t" style="left:828.8px;top:512px;font-size:11.9px;line-height:14px;color:#3b3b3b;font-weight:normal;">2021-03</div>
<div class="t" style="left:887.8px;top:512px;font-size:11.9px;line-height:14px;color:#3b3b3b;font-weight:normal;">2021-05</div>
<div class="t" style="left:947.1999999999999px;top:512px;font-size:11.9px;line-height:14px;color:#3b3b3b;font-weight:normal;">2021-06</div>
<div class="t" style="left:1005.3px;top:512px;font-size:11.9px;line-height:14px;color:#3b3b3b;font-weight:normal;">2021-07</div>
<div class="t" style="left:1064.3999999999999px;top:512px;font-size:11.9px;line-height:14px;color:#3b3b3b;font-weight:normal;">2021-08</div>
<div class="t" style="left:1123.3999999999999px;top:512px;font-size:11.9px;line-height:14px;color:#3b3b3b;font-weight:normal;">2021-09</div>
<div class="t" style="left:1182.2px;top:512px;font-size:11.9px;line-height:14px;color:#3b3b3b;font-weight:normal;">2021-10</div>
<div class="t" style="left:1241.2px;top:512px;font-size:11.9px;line-height:14px;color:#3b3b3b;font-weight:normal;">2021-11</div>
<div class="t" style="left:1299.7px;top:512px;font-size:11.9px;line-height:14px;color:#3b3b3b;font-weight:normal;">2021-12</div>
<div class="t" style="left:1358.2px;top:512px;font-size:11.9px;line-height:14px;color:#3b3b3b;font-weight:normal;">2022-01</div>
<div class="t" style="left:1417.6px;top:512px;font-size:12.3px;line-height:15px;color:#252423;font-weight:bold;">Total</div>
<svg class="r" style="left:1416px;top:524px;" width="12" height="7" viewBox="0 0 12 7"><path d="M1.5 1 H10 L5.75 5.5 Z" fill="#252423"/></svg>
<svg class="r" style="left:483px;top:540.0px;" width="13" height="13" viewBox="0 0 13 13"><rect x="1.5" y="1.5" width="10" height="10" fill="none" stroke="#a8a8a8" stroke-width="1"/><path d="M4 6.5 H9 M6.5 4 V9" stroke="#808080" stroke-width="1"/></svg>
<div class="t" style="left:505px;top:538.5px;width:51px;overflow:hidden;font-size:12.5px;line-height:15px;color:#333;letter-spacing:-0.3px">ZONA 7 :</div>
<div class="t" style="right:836.5999999999999px;top:540px;font-size:14.2px;line-height:17px;color:#3b3b3b;font-weight:normal;text-align:right;">84</div>
<div class="t" style="right:778.0999999999999px;top:540px;font-size:14.2px;line-height:17px;color:#3b3b3b;font-weight:normal;text-align:right;">182</div>
<div class="t" style="right:719.5999999999999px;top:540px;font-size:14.2px;line-height:17px;color:#3b3b3b;font-weight:normal;text-align:right;">180</div>
<div class="t" style="right:610.5px;top:540px;font-size:14.2px;line-height:17px;color:#252423;font-weight:bold;text-align:right;">446</div>
<svg class="r" style="left:483px;top:563.05px;" width="13" height="13" viewBox="0 0 13 13"><rect x="1.5" y="1.5" width="10" height="10" fill="none" stroke="#a8a8a8" stroke-width="1"/><path d="M4 6.5 H9 M6.5 4 V9" stroke="#808080" stroke-width="1"/></svg>
<div class="t" style="left:505px;top:561.5px;width:51px;overflow:hidden;font-size:12.5px;line-height:15px;color:#333;letter-spacing:-0.3px">ZONA 10</div>
<div class="t" style="right:836.5999999999999px;top:563px;font-size:14.2px;line-height:17px;color:#3b3b3b;font-weight:normal;text-align:right;">78</div>
<div class="t" style="right:778.0999999999999px;top:563px;font-size:14.2px;line-height:17px;color:#3b3b3b;font-weight:normal;text-align:right;">183</div>
<div class="t" style="right:719.5999999999999px;top:563px;font-size:14.2px;line-height:17px;color:#3b3b3b;font-weight:normal;text-align:right;">181</div>
<div class="t" style="right:610.5px;top:563px;font-size:14.2px;line-height:17px;color:#252423;font-weight:bold;text-align:right;">442</div>
<svg class="r" style="left:483px;top:586.1px;" width="13" height="13" viewBox="0 0 13 13"><rect x="1.5" y="1.5" width="10" height="10" fill="none" stroke="#a8a8a8" stroke-width="1"/><path d="M4 6.5 H9 M6.5 4 V9" stroke="#808080" stroke-width="1"/></svg>
<div class="t" style="left:505px;top:584.6px;width:51px;overflow:hidden;font-size:12.5px;line-height:15px;color:#333;letter-spacing:-0.3px">ZONA 4 :</div>
<div class="t" style="right:836.5999999999999px;top:586px;font-size:14.2px;line-height:17px;color:#3b3b3b;font-weight:normal;text-align:right;">88</div>
<div class="t" style="right:778.0999999999999px;top:586px;font-size:14.2px;line-height:17px;color:#3b3b3b;font-weight:normal;text-align:right;">175</div>
<div class="t" style="right:719.5999999999999px;top:586px;font-size:14.2px;line-height:17px;color:#3b3b3b;font-weight:normal;text-align:right;">175</div>
<div class="t" style="right:610.5px;top:586px;font-size:14.2px;line-height:17px;color:#252423;font-weight:bold;text-align:right;">438</div>
<svg class="r" style="left:483px;top:609.15px;" width="13" height="13" viewBox="0 0 13 13"><rect x="1.5" y="1.5" width="10" height="10" fill="none" stroke="#a8a8a8" stroke-width="1"/><path d="M4 6.5 H9 M6.5 4 V9" stroke="#808080" stroke-width="1"/></svg>
<div class="t" style="left:505px;top:607.6px;width:51px;overflow:hidden;font-size:12.5px;line-height:15px;color:#333;letter-spacing:-0.3px">ZONA 3 :</div>
<div class="t" style="right:895.5999999999999px;top:609px;font-size:14.2px;line-height:17px;color:#3b3b3b;font-weight:normal;text-align:right;">1</div>
<div class="t" style="right:836.5999999999999px;top:609px;font-size:14.2px;line-height:17px;color:#3b3b3b;font-weight:normal;text-align:right;">89</div>
<div class="t" style="right:778.0999999999999px;top:609px;font-size:14.2px;line-height:17px;color:#3b3b3b;font-weight:normal;text-align:right;">168</div>
<div class="t" style="right:719.5999999999999px;top:609px;font-size:14.2px;line-height:17px;color:#3b3b3b;font-weight:normal;text-align:right;">168</div>
<div class="t" style="right:610.5px;top:609px;font-size:14.2px;line-height:17px;color:#252423;font-weight:bold;text-align:right;">426</div>
<svg class="r" style="left:483px;top:632.2px;" width="13" height="13" viewBox="0 0 13 13"><rect x="1.5" y="1.5" width="10" height="10" fill="none" stroke="#a8a8a8" stroke-width="1"/><path d="M4 6.5 H9 M6.5 4 V9" stroke="#808080" stroke-width="1"/></svg>
<div class="t" style="left:505px;top:630.7px;width:51px;overflow:hidden;font-size:12.5px;line-height:15px;color:#333;letter-spacing:-0.3px">ZONA 1 :</div>
<div class="t" style="right:895.5999999999999px;top:632px;font-size:14.2px;line-height:17px;color:#3b3b3b;font-weight:normal;text-align:right;">1</div>
<div class="t" style="right:836.5999999999999px;top:632px;font-size:14.2px;line-height:17px;color:#3b3b3b;font-weight:normal;text-align:right;">92</div>
<div class="t" style="right:778.0999999999999px;top:632px;font-size:14.2px;line-height:17px;color:#3b3b3b;font-weight:normal;text-align:right;">166</div>
<div class="t" style="right:719.5999999999999px;top:632px;font-size:14.2px;line-height:17px;color:#3b3b3b;font-weight:normal;text-align:right;">166</div>
<div class="t" style="right:610.5px;top:632px;font-size:14.2px;line-height:17px;color:#252423;font-weight:bold;text-align:right;">425</div>
<svg class="r" style="left:483px;top:655.25px;" width="13" height="13" viewBox="0 0 13 13"><rect x="1.5" y="1.5" width="10" height="10" fill="none" stroke="#a8a8a8" stroke-width="1"/><path d="M4 6.5 H9 M6.5 4 V9" stroke="#808080" stroke-width="1"/></svg>
<div class="t" style="left:505px;top:653.8px;width:51px;overflow:hidden;font-size:12.5px;line-height:15px;color:#333;letter-spacing:-0.3px">ZONA 9 :</div>
<div class="t" style="right:1013.4000000000001px;top:655px;font-size:14.2px;line-height:17px;color:#3b3b3b;font-weight:normal;text-align:right;">1</div>
<div class="t" style="right:895.5999999999999px;top:655px;font-size:14.2px;line-height:17px;color:#3b3b3b;font-weight:normal;text-align:right;">3</div>
<div class="t" style="right:836.5999999999999px;top:655px;font-size:14.2px;line-height:17px;color:#3b3b3b;font-weight:normal;text-align:right;">85</div>
<div class="t" style="right:778.0999999999999px;top:655px;font-size:14.2px;line-height:17px;color:#3b3b3b;font-weight:normal;text-align:right;">167</div>
<div class="t" style="right:719.5999999999999px;top:655px;font-size:14.2px;line-height:17px;color:#3b3b3b;font-weight:normal;text-align:right;">167</div>
<div class="t" style="right:610.5px;top:655px;font-size:14.2px;line-height:17px;color:#252423;font-weight:bold;text-align:right;">423</div>
<svg class="r" style="left:483px;top:678.3px;" width="13" height="13" viewBox="0 0 13 13"><rect x="1.5" y="1.5" width="10" height="10" fill="none" stroke="#a8a8a8" stroke-width="1"/><path d="M4 6.5 H9 M6.5 4 V9" stroke="#808080" stroke-width="1"/></svg>
<div class="t" style="left:505px;top:676.8px;width:51px;overflow:hidden;font-size:12.5px;line-height:15px;color:#333;letter-spacing:-0.3px">ZONA 5 :</div>
<div class="t" style="right:1072.5px;top:678px;font-size:14.2px;line-height:17px;color:#3b3b3b;font-weight:normal;text-align:right;">1</div>
<div class="t" style="right:1013.4000000000001px;top:678px;font-size:14.2px;line-height:17px;color:#3b3b3b;font-weight:normal;text-align:right;">1</div>
<div class="t" style="right:895.5999999999999px;top:678px;font-size:14.2px;line-height:17px;color:#3b3b3b;font-weight:normal;text-align:right;">1</div>
<div class="t" style="right:836.5999999999999px;top:678px;font-size:14.2px;line-height:17px;color:#3b3b3b;font-weight:normal;text-align:right;">86</div>
<div class="t" style="right:778.0999999999999px;top:678px;font-size:14.2px;line-height:17px;color:#3b3b3b;font-weight:normal;text-align:right;">167</div>
<div class="t" style="right:719.5999999999999px;top:678px;font-size:14.2px;line-height:17px;color:#3b3b3b;font-weight:normal;text-align:right;">166</div>
<div class="t" style="right:610.5px;top:678px;font-size:14.2px;line-height:17px;color:#252423;font-weight:bold;text-align:right;">422</div>
<svg class="r" style="left:483px;top:701.35px;" width="13" height="13" viewBox="0 0 13 13"><rect x="1.5" y="1.5" width="10" height="10" fill="none" stroke="#a8a8a8" stroke-width="1"/><path d="M4 6.5 H9 M6.5 4 V9" stroke="#808080" stroke-width="1"/></svg>
<div class="t" style="left:505px;top:699.9px;width:51px;overflow:hidden;font-size:12.5px;line-height:15px;color:#333;letter-spacing:-0.3px">ZONA 8 :</div>
<div class="t" style="right:836.5999999999999px;top:701px;font-size:14.2px;line-height:17px;color:#3b3b3b;font-weight:normal;text-align:right;">83</div>
<div class="t" style="right:778.0999999999999px;top:701px;font-size:14.2px;line-height:17px;color:#3b3b3b;font-weight:normal;text-align:right;">151</div>
<div class="t" style="right:719.5999999999999px;top:701px;font-size:14.2px;line-height:17px;color:#3b3b3b;font-weight:normal;text-align:right;">151</div>
<div class="t" style="right:610.5px;top:701px;font-size:14.2px;line-height:17px;color:#252423;font-weight:bold;text-align:right;">385</div>
<svg class="r" style="left:483px;top:724.4px;" width="13" height="13" viewBox="0 0 13 13"><rect x="1.5" y="1.5" width="10" height="10" fill="none" stroke="#a8a8a8" stroke-width="1"/><path d="M4 6.5 H9 M6.5 4 V9" stroke="#808080" stroke-width="1"/></svg>
<div class="t" style="left:505px;top:722.9px;width:51px;overflow:hidden;font-size:12.5px;line-height:15px;color:#333;letter-spacing:-0.3px">ZONA 6 :</div>
<div class="t" style="right:1072.5px;top:724px;font-size:14.2px;line-height:17px;color:#3b3b3b;font-weight:normal;text-align:right;">2</div>
<div class="t" style="right:1013.4000000000001px;top:724px;font-size:14.2px;line-height:17px;color:#3b3b3b;font-weight:normal;text-align:right;">2</div>
<div class="t" style="right:895.5999999999999px;top:724px;font-size:14.2px;line-height:17px;color:#3b3b3b;font-weight:normal;text-align:right;">2</div>
<div class="t" style="right:836.5999999999999px;top:724px;font-size:14.2px;line-height:17px;color:#3b3b3b;font-weight:normal;text-align:right;">83</div>
<div class="t" style="right:778.0999999999999px;top:724px;font-size:14.2px;line-height:17px;color:#3b3b3b;font-weight:normal;text-align:right;">136</div>
<div class="t" style="right:719.5999999999999px;top:724px;font-size:14.2px;line-height:17px;color:#3b3b3b;font-weight:normal;text-align:right;">136</div>
<div class="t" style="right:610.5px;top:724px;font-size:14.2px;line-height:17px;color:#252423;font-weight:bold;text-align:right;">361</div>
<svg class="r" style="left:483px;top:747.45px;" width="13" height="13" viewBox="0 0 13 13"><rect x="1.5" y="1.5" width="10" height="10" fill="none" stroke="#a8a8a8" stroke-width="1"/><path d="M4 6.5 H9 M6.5 4 V9" stroke="#808080" stroke-width="1"/></svg>
<div class="t" style="left:505px;top:746.0px;width:51px;overflow:hidden;font-size:12.5px;line-height:15px;color:#333;letter-spacing:-0.3px">ZONA 2 :</div>
<div class="t" style="right:895.5999999999999px;top:747px;font-size:14.2px;line-height:17px;color:#3b3b3b;font-weight:normal;text-align:right;">2</div>
<div class="t" style="right:836.5999999999999px;top:747px;font-size:14.2px;line-height:17px;color:#3b3b3b;font-weight:normal;text-align:right;">55</div>
<div class="t" style="right:778.0999999999999px;top:747px;font-size:14.2px;line-height:17px;color:#3b3b3b;font-weight:normal;text-align:right;">148</div>
<div class="t" style="right:719.5999999999999px;top:747px;font-size:14.2px;line-height:17px;color:#3b3b3b;font-weight:normal;text-align:right;">148</div>
<div class="t" style="right:610.5px;top:747px;font-size:14.2px;line-height:17px;color:#252423;font-weight:bold;text-align:right;">353</div>
<svg class="r" style="left:483px;top:770.5px;" width="13" height="13" viewBox="0 0 13 13"><rect x="1.5" y="1.5" width="10" height="10" fill="none" stroke="#a8a8a8" stroke-width="1"/><path d="M4 6.5 H9 M6.5 4 V9" stroke="#808080" stroke-width="1"/></svg>
<div class="t" style="left:505px;top:769.0px;width:51px;overflow:hidden;font-size:12.5px;line-height:15px;color:#333;letter-spacing:-0.3px">ZONA 11</div>
<div class="t" style="right:1072.5px;top:770px;font-size:14.2px;line-height:17px;color:#3b3b3b;font-weight:normal;text-align:right;">1</div>
<div class="t" style="right:1013.4000000000001px;top:770px;font-size:14.2px;line-height:17px;color:#3b3b3b;font-weight:normal;text-align:right;">2</div>
<div class="t" style="right:836.5999999999999px;top:770px;font-size:14.2px;line-height:17px;color:#3b3b3b;font-weight:normal;text-align:right;">56</div>
<div class="t" style="right:778.0999999999999px;top:770px;font-size:14.2px;line-height:17px;color:#3b3b3b;font-weight:normal;text-align:right;">128</div>
<div class="t" style="right:719.5999999999999px;top:770px;font-size:14.2px;line-height:17px;color:#3b3b3b;font-weight:normal;text-align:right;">125</div>
<div class="t" style="right:610.5px;top:770px;font-size:14.2px;line-height:17px;color:#252423;font-weight:bold;text-align:right;">312</div>
<svg class="r" style="left:483px;top:793.55px;" width="13" height="13" viewBox="0 0 13 13"><rect x="1.5" y="1.5" width="10" height="10" fill="none" stroke="#a8a8a8" stroke-width="1"/><path d="M4 6.5 H9 M6.5 4 V9" stroke="#808080" stroke-width="1"/></svg>
<div class="t" style="left:505px;top:792.0px;width:51px;overflow:hidden;font-size:12.5px;line-height:15px;color:#333;letter-spacing:-0.3px">ZONA 12</div>
<div class="t" style="right:1013.4000000000001px;top:794px;font-size:14.2px;line-height:17px;color:#3b3b3b;font-weight:normal;text-align:right;">2</div>
<div class="t" style="right:836.5999999999999px;top:794px;font-size:14.2px;line-height:17px;color:#3b3b3b;font-weight:normal;text-align:right;">72</div>
<div class="t" style="right:778.0999999999999px;top:794px;font-size:14.2px;line-height:17px;color:#3b3b3b;font-weight:normal;text-align:right;">116</div>
<div class="t" style="right:719.5999999999999px;top:794px;font-size:14.2px;line-height:17px;color:#3b3b3b;font-weight:normal;text-align:right;">112</div>
<div class="t" style="right:610.5px;top:794px;font-size:14.2px;line-height:17px;color:#252423;font-weight:bold;text-align:right;">302</div>
<svg class="r" style="left:483px;top:816.6px;" width="13" height="13" viewBox="0 0 13 13"><rect x="1.5" y="1.5" width="10" height="10" fill="none" stroke="#a8a8a8" stroke-width="1"/><path d="M4 6.5 H9 M6.5 4 V9" stroke="#808080" stroke-width="1"/></svg>
<div class="t" style="left:505px;top:815.1px;width:51px;overflow:hidden;font-size:12.5px;line-height:15px;color:#333;letter-spacing:-0.3px">PUERTAS</div>
<div class="t" style="left:687px;top:816px;font-size:12.5px;line-height:15px;color:#333;font-weight:normal;letter-spacing:-0.6px">TO</div>
<div class="t" style="right:1013.4000000000001px;top:817px;font-size:14.2px;line-height:17px;color:#3b3b3b;font-weight:normal;text-align:right;">86</div>
<div class="t" style="right:954.4000000000001px;top:817px;font-size:14.2px;line-height:17px;color:#3b3b3b;font-weight:normal;text-align:right;">63</div>
<div class="t" style="right:895.5999999999999px;top:817px;font-size:14.2px;line-height:17px;color:#3b3b3b;font-weight:normal;text-align:right;">3</div>
<div class="t" style="right:836.5999999999999px;top:817px;font-size:14.2px;line-height:17px;color:#3b3b3b;font-weight:normal;text-align:right;">2</div>
<div class="t" style="right:778.0999999999999px;top:817px;font-size:14.2px;line-height:17px;color:#3b3b3b;font-weight:normal;text-align:right;">15</div>
<div class="t" style="right:659.7px;top:817px;font-size:14.2px;line-height:17px;color:#3b3b3b;font-weight:normal;text-align:right;">1</div>
<div class="t" style="right:610.5px;top:817px;font-size:14.2px;line-height:17px;color:#252423;font-weight:bold;text-align:right;">170</div>
<svg class="r" style="left:483px;top:839.6500000000001px;" width="13" height="13" viewBox="0 0 13 13"><rect x="1.5" y="1.5" width="10" height="10" fill="none" stroke="#a8a8a8" stroke-width="1"/><path d="M4 6.5 H9 M6.5 4 V9" stroke="#808080" stroke-width="1"/></svg>
<div class="t" style="left:505px;top:838.2px;width:51px;overflow:hidden;font-size:12.5px;line-height:15px;color:#333;letter-spacing:-0.3px">ZONA JA</div>
<div class="t" style="left:687px;top:839px;font-size:12.5px;line-height:15px;color:#333;font-weight:normal;letter-spacing:-0.6px">TO</div>
<div class="t" style="right:1013.4000000000001px;top:840px;font-size:14.2px;line-height:17px;color:#3b3b3b;font-weight:normal;text-align:right;">10</div>
<div class="t" style="right:954.4000000000001px;top:840px;font-size:14.2px;line-height:17px;color:#3b3b3b;font-weight:normal;text-align:right;">8</div>
<div class="t" style="right:836.5999999999999px;top:840px;font-size:14.2px;line-height:17px;color:#3b3b3b;font-weight:normal;text-align:right;">11</div>
<div class="t" style="right:778.0999999999999px;top:840px;font-size:14.2px;line-height:17px;color:#3b3b3b;font-weight:normal;text-align:right;">10</div>
<div class="t" style="right:719.5999999999999px;top:840px;font-size:14.2px;line-height:17px;color:#3b3b3b;font-weight:normal;text-align:right;">10</div>
<div class="t" style="right:610.5px;top:840px;font-size:14.2px;line-height:17px;color:#252423;font-weight:bold;text-align:right;">49</div>
<svg class="r" style="left:483px;top:862.7px;" width="13" height="13" viewBox="0 0 13 13"><rect x="1.5" y="1.5" width="10" height="10" fill="none" stroke="#a8a8a8" stroke-width="1"/><path d="M4 6.5 H9 M6.5 4 V9" stroke="#808080" stroke-width="1"/></svg>
<div class="t" style="left:505px;top:861.2px;width:51px;overflow:hidden;font-size:12.5px;line-height:15px;color:#333;letter-spacing:-0.3px">ZONA 6 :</div>
<div class="t" style="right:1190px;top:863px;font-size:14.2px;line-height:17px;color:#3b3b3b;font-weight:normal;text-align:right;">1</div>
<div class="t" style="right:1013.4000000000001px;top:863px;font-size:14.2px;line-height:17px;color:#3b3b3b;font-weight:normal;text-align:right;">2</div>
<div class="t" style="right:954.4000000000001px;top:863px;font-size:14.2px;line-height:17px;color:#3b3b3b;font-weight:normal;text-align:right;">18</div>
<div class="t" style="right:895.5999999999999px;top:863px;font-size:14.2px;line-height:17px;color:#3b3b3b;font-weight:normal;text-align:right;">1</div>
<div class="t" style="right:610.5px;top:863px;font-size:14.2px;line-height:17px;color:#252423;font-weight:bold;text-align:right;">22</div>
<svg class="r" style="left:483px;top:885.75px;" width="13" height="13" viewBox="0 0 13 13"><rect x="1.5" y="1.5" width="10" height="10" fill="none" stroke="#a8a8a8" stroke-width="1"/><path d="M4 6.5 H9 M6.5 4 V9" stroke="#808080" stroke-width="1"/></svg>
<div class="t" style="left:505px;top:884.2px;width:51px;overflow:hidden;font-size:12.5px;line-height:15px;color:#333;letter-spacing:-0.3px">ZONA 2 '</div>
<div class="t" style="right:1190px;top:886px;font-size:14.2px;line-height:17px;color:#3b3b3b;font-weight:normal;text-align:right;">1</div>
<div class="t" style="right:836.5999999999999px;top:886px;font-size:14.2px;line-height:17px;color:#3b3b3b;font-weight:normal;text-align:right;">19</div>
<div class="t" style="right:610.5px;top:886px;font-size:14.2px;line-height:17px;color:#252423;font-weight:bold;text-align:right;">20</div>
<svg class="r" style="left:483px;top:908.8px;" width="13" height="13" viewBox="0 0 13 13"><rect x="1.5" y="1.5" width="10" height="10" fill="none" stroke="#a8a8a8" stroke-width="1"/><path d="M4 6.5 H9 M6.5 4 V9" stroke="#808080" stroke-width="1"/></svg>
<div class="t" style="left:505px;top:907.3px;width:51px;overflow:hidden;font-size:12.5px;line-height:15px;color:#333;letter-spacing:-0.3px">ZONA 1 '</div>
<div class="t" style="right:1130.6px;top:909px;font-size:14.2px;line-height:17px;color:#3b3b3b;font-weight:normal;text-align:right;">1</div>
<div class="t" style="right:954.4000000000001px;top:909px;font-size:14.2px;line-height:17px;color:#3b3b3b;font-weight:normal;text-align:right;">14</div>
<div class="t" style="right:778.0999999999999px;top:909px;font-size:14.2px;line-height:17px;color:#3b3b3b;font-weight:normal;text-align:right;">1</div>
<div class="t" style="right:610.5px;top:909px;font-size:14.2px;line-height:17px;color:#252423;font-weight:bold;text-align:right;">16</div>
<svg class="r" style="left:483px;top:931.85px;" width="13" height="13" viewBox="0 0 13 13"><rect x="1.5" y="1.5" width="10" height="10" fill="none" stroke="#a8a8a8" stroke-width="1"/><path d="M4 6.5 H9 M6.5 4 V9" stroke="#808080" stroke-width="1"/></svg>
<div class="t" style="left:505px;top:930.4px;width:51px;overflow:hidden;font-size:12.5px;line-height:15px;color:#333;letter-spacing:-0.3px">ZONA 3 :</div>
<div class="t" style="right:1013.4000000000001px;top:932px;font-size:14.2px;line-height:17px;color:#3b3b3b;font-weight:normal;text-align:right;">8</div>
<div class="t" style="right:954.4000000000001px;top:932px;font-size:14.2px;line-height:17px;color:#3b3b3b;font-weight:normal;text-align:right;">4</div>
<div class="t" style="right:895.5999999999999px;top:932px;font-size:14.2px;line-height:17px;color:#3b3b3b;font-weight:normal;text-align:right;">1</div>
<div class="t" style="right:778.0999999999999px;top:932px;font-size:14.2px;line-height:17px;color:#3b3b3b;font-weight:normal;text-align:right;">1</div>
<div class="t" style="right:610.5px;top:932px;font-size:14.2px;line-height:17px;color:#252423;font-weight:bold;text-align:right;">14</div>
<svg class="r" style="left:483px;top:954.9000000000001px;" width="13" height="13" viewBox="0 0 13 13"><rect x="1.5" y="1.5" width="10" height="10" fill="none" stroke="#a8a8a8" stroke-width="1"/><path d="M4 6.5 H9 M6.5 4 V9" stroke="#808080" stroke-width="1"/></svg>
<div class="t" style="left:505px;top:953.4px;width:51px;overflow:hidden;font-size:12.5px;line-height:15px;color:#333;letter-spacing:-0.3px">ZONA 7 :</div>
<div class="t" style="right:1013.4000000000001px;top:955px;font-size:14.2px;line-height:17px;color:#3b3b3b;font-weight:normal;text-align:right;">8</div>
<div class="t" style="right:954.4000000000001px;top:955px;font-size:14.2px;line-height:17px;color:#3b3b3b;font-weight:normal;text-align:right;">6</div>
<div class="t" style="right:610.5px;top:955px;font-size:14.2px;line-height:17px;color:#252423;font-weight:bold;text-align:right;">14</div>
<div class="t" style="left:505px;top:974px;font-size:12.5px;line-height:15px;color:#252423;font-weight:bold;">Total</div>
<div class="t" style="right:1249px;top:975px;font-size:14.2px;line-height:17px;color:#252423;font-weight:bold;text-align:right;">8</div>
<div class="t" style="right:1190px;top:975px;font-size:14.2px;line-height:17px;color:#252423;font-weight:bold;text-align:right;">4</div>
<div class="t" style="right:1130.6px;top:975px;font-size:14.2px;line-height:17px;color:#252423;font-weight:bold;text-align:right;">1</div>
<div class="t" style="right:1072.5px;top:975px;font-size:14.2px;line-height:17px;color:#252423;font-weight:bold;text-align:right;">4</div>
<div class="t" style="right:1013.4000000000001px;top:975px;font-size:14.2px;line-height:17px;color:#252423;font-weight:bold;text-align:right;">150</div>
<div class="t" style="right:954.4000000000001px;top:975px;font-size:14.2px;line-height:17px;color:#252423;font-weight:bold;text-align:right;">174</div>
<div class="t" style="right:895.5999999999999px;top:975px;font-size:14.2px;line-height:17px;color:#252423;font-weight:bold;text-align:right;">19</div>
<div class="t" style="right:836.5999999999999px;top:975px;font-size:14.2px;line-height:17px;color:#252423;font-weight:bold;text-align:right;">985</div>
<div class="t" style="right:778.0999999999999px;top:975px;font-size:14.2px;line-height:17px;color:#252423;font-weight:bold;text-align:right;">1914</div>
<div class="t" style="right:719.5999999999999px;top:975px;font-size:14.2px;line-height:17px;color:#252423;font-weight:bold;text-align:right;">1887</div>
<div class="t" style="right:659.7px;top:975px;font-size:14.2px;line-height:17px;color:#252423;font-weight:bold;text-align:right;">1</div>
<div class="t" style="right:610.5px;top:975px;font-size:14.2px;line-height:17px;color:#252423;font-weight:bold;text-align:right;">5147</div>
<div class="r" style="left:1471.5px;top:508.5px;width:9.5px;height:473px;background:#f1f1f1;"></div>
<div class="r" style="left:1471.5px;top:539.5px;width:9.5px;height:222.5px;background:#c8c8c8;"></div>
<svg class="r" style="left:1470px;top:516px;" width="12" height="10" viewBox="0 0 12 10"><path d="M2 7.5 L6 3 L10 7.5" fill="none" stroke="#666" stroke-width="1.2"/></svg>
<svg class="r" style="left:1470px;top:963px;" width="12" height="10" viewBox="0 0 12 10"><path d="M2 2.5 L6 7 L10 2.5" fill="none" stroke="#666" stroke-width="1.2"/></svg>
<div class="t" style="left:1492.7px;top:505px;font-size:13.66px;line-height:16px;color:#c4c4c4;font-weight:normal;">Recuento de PedidoServicio por LatitudGmap y LongitudGmap</div>
<svg class="r" style="left:1493px;top:527.5px" width="450.5" height="464.5" viewBox="1493 527.5 450.5 464.5"><rect x="1493" y="527.5" width="450.5" height="464.5" fill="#f0eeeb"/><path d="M1850 560 L1943 560 L1943 760 L1880 760 L1860 700 L1845 640 Z" fill="#ebe3e2"/><path d="M1817 755 L1943 755 L1943 810 L1880 800 L1830 790 Z" fill="#ebe3e2"/><path d="M1619.0 632.0 L1617.9 615.0 L1621.0 600.0 L1630.0 640.0 L1629.0 667.0 L1634.0 714.0 L1633.0 725.0 L1581.0 744.0 L1562.0 776.0 L1540.0 786.0 L1493.0 790.0 L1493.0 733.0 L1509.0 724.0 L1537.4 712.1 L1572.9 697.9 L1599.0 681.3 L1613.2 657.6 Z" fill="#c9e0ac"/><path d="M1570.0 782.0 L1600.0 772.0 L1626.0 774.0 L1653.0 785.0 L1672.0 801.0 L1690.0 826.0 L1690.0 838.0 L1668.0 812.0 L1650.0 797.0 L1625.0 787.0 L1600.0 786.0 L1572.0 794.0 Z" fill="#c9e0ac"/><path d="M1693.0 613.0 L1741.0 613.0 L1741.0 625.0 L1693.0 625.0 Z" fill="#c9e0ac"/><path d="M1720.0 840.0 L1780.0 856.0 L1818.0 872.0 L1860.0 888.0 L1925.0 912.0 L1925.0 918.0 L1855.0 894.0 L1815.0 878.0 L1778.0 862.0 L1718.0 846.0 Z" fill="#c9e0ac"/><path d="M1772.8 593.7 L1789.4 593.7 L1789.4 610.3 L1772.8 610.3 Z" fill="#c9e0ac"/><path d="M1710.0 613.8 L1740.8 613.8 L1740.8 624.5 L1710.0 624.5 Z" fill="#c9e0ac"/><path d="M1730.0 657.7 L1748.0 657.7 L1748.0 688.5 L1730.0 688.5 Z" fill="#c9e0ac"/><path d="M1738.4 716.9 L1749.0 716.9 L1749.0 760.0 L1738.4 760.0 Z" fill="#c9e0ac"/><path d="M1585.5 798.0 L1604.6 798.0 L1604.6 826.6 L1585.5 826.6 Z" fill="#c9e0ac"/><path d="M1631.0 841.0 L1657.2 841.0 L1657.2 855.3 L1631.0 855.3 Z" fill="#c9e0ac"/><path d="M1518.7 860.0 L1556.9 865.0 L1556.9 879.2 L1518.7 874.0 Z" fill="#c9e0ac"/><path d="M1493.6 874.4 L1504.3 874.4 L1504.3 903.0 L1493.6 903.0 Z" fill="#c9e0ac"/><path d="M1533.0 927.0 L1561.6 927.0 L1561.6 955.6 L1533.0 955.6 Z" fill="#c9e0ac"/><path d="M1757.8 776.5 L1786.4 776.5 L1786.4 814.7 L1757.8 814.7 Z" fill="#c9e0ac"/><path d="M1822.0 790.0 L1830.0 792.0 L1815.0 822.0 L1808.0 818.0 Z" fill="#c9e0ac"/><path d="M1891.5 798.0 L1905.8 798.0 L1905.8 810.0 L1891.5 810.0 Z" fill="#c9e0ac"/><path d="M1908.2 874.4 L1920.2 874.4 L1920.2 893.5 L1908.2 893.5 Z" fill="#c9e0ac"/><path d="M1822.0 898.0 L1853.0 898.0 L1853.0 941.0 L1822.0 941.0 Z" fill="#c9e0ac"/><path d="M1855.0 850.0 L1880.0 845.0 L1880.0 860.0 L1855.0 865.0 Z" fill="#c9e0ac"/><path d="M1570.0 940.0 L1590.0 940.0 L1590.0 960.0 L1570.0 960.0 Z" fill="#c9e0ac"/><path d="M1488.0 528.0 C1493.1 530.3 1508.2 535.8 1518.4 541.6 C1528.6 547.4 1538.2 557.0 1549.2 562.9 C1560.2 568.8 1574.8 572.0 1584.7 577.1 C1594.6 582.2 1602.9 587.4 1608.4 593.7 C1613.9 600.0 1616.1 607.9 1617.9 615.0 C1619.7 622.1 1619.8 629.2 1619.0 636.3 C1618.2 643.4 1616.5 650.1 1613.2 657.6 C1609.9 665.1 1605.7 674.6 1599.0 681.3 C1592.3 688.0 1583.2 692.8 1572.9 697.9 C1562.6 703.0 1548.1 707.8 1537.4 712.1 C1526.8 716.5 1517.2 720.2 1509.0 724.0 C1500.8 727.8 1491.5 733.2 1488.0 735.0" fill="none" stroke="#a2c5f3" stroke-width="8.5"/><path d="M1488.0 789.0 C1494.4 788.7 1513.0 789.2 1526.3 787.1 C1539.6 785.0 1555.9 779.8 1568.0 776.2 C1580.1 772.6 1589.3 766.8 1599.0 765.3 C1608.7 763.8 1617.0 765.1 1626.0 767.2 C1635.0 769.3 1645.7 773.5 1653.3 778.0 C1660.9 782.5 1665.4 787.4 1671.5 794.4 C1677.6 801.4 1681.9 813.2 1690.0 819.8 C1698.1 826.4 1710.7 830.5 1720.0 834.0 C1729.3 837.5 1735.5 838.2 1745.8 841.0 C1756.1 843.8 1769.6 846.1 1781.6 850.5 C1793.5 854.9 1805.5 862.0 1817.5 867.2 C1829.5 872.4 1841.4 877.2 1853.3 881.6 C1865.2 886.0 1877.1 889.1 1889.1 893.5 C1901.0 897.9 1915.2 904.0 1925.0 907.8 C1934.8 911.5 1944.2 914.6 1948.0 916.0" fill="none" stroke="#a2c5f3" stroke-width="10"/><path d="M1725 598 C1740 600 1745 610 1760 605 C1770 602 1780 606 1790 600" fill="none" stroke="#b9d3f5" stroke-width="1.5"/><path d="M1508 754 L1550 727 L1566 723.6 L1560 745 L1550 776 L1526 778 Z" fill="#e9eee6"/><path d="M1510 756 L1552 730 M1516 764 L1556 738 M1522 772 L1558 748 M1548 733 L1540 776" fill="none" stroke="#a9c8f0" stroke-width="1.8"/><path d="M1525.8 821.9 L1633.3 869.6 L1657.2 903 L1671.5 965.2 L1693 992" fill="none" stroke="#c6c6cc" stroke-width="1.2"/><path d="M1862 528 L1830 660 L1812 760" fill="none" stroke="#cfcfd4" stroke-width="1"/><path d="M1617.9 527.4 L1644.0 553.4 L1686.6 581.8" fill="none" stroke="#ecd9a6" stroke-width="5.2" stroke-linejoin="round" stroke-linecap="round"/><path d="M1617.9 527.4 L1644.0 553.4 L1686.6 581.8" fill="none" stroke="#fdf4d6" stroke-width="3.2" stroke-linejoin="round" stroke-linecap="round"/><path d="M1720.0 579.5 L1691.3 584.2 L1655.8 586.6 L1641.6 600.8 L1629.7 638.7 L1628.6 667.1 L1634.5 714.5 L1640.6 732.7 L1671.5 772.6 L1690.0 801.6" fill="none" stroke="#ecd9a6" stroke-width="5.2" stroke-linejoin="round" stroke-linecap="round"/><path d="M1720.0 579.5 L1691.3 584.2 L1655.8 586.6 L1641.6 600.8 L1629.7 638.7 L1628.6 667.1 L1634.5 714.5 L1640.6 732.7 L1671.5 772.6 L1690.0 801.6" fill="none" stroke="#fdf4d6" stroke-width="3.2" stroke-linejoin="round" stroke-linecap="round"/><path d="M1690.1 584.2 L1689.0 657.6 L1686.6 714.5 L1691.3 760.0" fill="none" stroke="#ecd9a6" stroke-width="5.2" stroke-linejoin="round" stroke-linecap="round"/><path d="M1690.1 584.2 L1689.0 657.6 L1686.6 714.5 L1691.3 760.0" fill="none" stroke="#fdf4d6" stroke-width="3.2" stroke-linejoin="round" stroke-linecap="round"/><path d="M1632.1 726.3 L1686.6 714.5 L1776.0 713.0" fill="none" stroke="#ecd9a6" stroke-width="5.2" stroke-linejoin="round" stroke-linecap="round"/><path d="M1632.1 726.3 L1686.6 714.5 L1776.0 713.0" fill="none" stroke="#fdf4d6" stroke-width="3.2" stroke-linejoin="round" stroke-linecap="round"/><path d="M1575.3 805.3 L1562.6 776.2 L1580.7 743.6 L1633.4 725.4" fill="none" stroke="#ecd9a6" stroke-width="5.2" stroke-linejoin="round" stroke-linecap="round"/><path d="M1575.3 805.3 L1562.6 776.2 L1580.7 743.6 L1633.4 725.4" fill="none" stroke="#fdf4d6" stroke-width="3.2" stroke-linejoin="round" stroke-linecap="round"/><path d="M1686.0 582.0 L1771.6 560.5 L1816.6 562.9" fill="none" stroke="#ecd9a6" stroke-width="5.2" stroke-linejoin="round" stroke-linecap="round"/><path d="M1686.0 582.0 L1771.6 560.5 L1816.6 562.9" fill="none" stroke="#fdf4d6" stroke-width="3.2" stroke-linejoin="round" stroke-linecap="round"/><path d="M1772.8 560.5 L1772.8 589.0 L1816.6 589.0" fill="none" stroke="#ecd9a6" stroke-width="5.2" stroke-linejoin="round" stroke-linecap="round"/><path d="M1772.8 560.5 L1772.8 589.0 L1816.6 589.0" fill="none" stroke="#fdf4d6" stroke-width="3.2" stroke-linejoin="round" stroke-linecap="round"/><path d="M1816.6 545.0 L1815.4 760.0 L1814.0 800.0" fill="none" stroke="#ecd9a6" stroke-width="5.2" stroke-linejoin="round" stroke-linecap="round"/><path d="M1816.6 545.0 L1815.4 760.0 L1814.0 800.0" fill="none" stroke="#fdf4d6" stroke-width="3.2" stroke-linejoin="round" stroke-linecap="round"/><path d="M1778.7 690.8 L1788.2 674.3 L1819.0 671.9 L1861.6 688.5 L1943.0 700.0" fill="none" stroke="#ecd9a6" stroke-width="5.2" stroke-linejoin="round" stroke-linecap="round"/><path d="M1778.7 690.8 L1788.2 674.3 L1819.0 671.9 L1861.6 688.5 L1943.0 700.0" fill="none" stroke="#fdf4d6" stroke-width="3.2" stroke-linejoin="round" stroke-linecap="round"/><path d="M1777.5 676.6 L1776.3 760.0 L1775.0 790.0" fill="none" stroke="#ecd9a6" stroke-width="5.2" stroke-linejoin="round" stroke-linecap="round"/><path d="M1777.5 676.6 L1776.3 760.0 L1775.0 790.0" fill="none" stroke="#fdf4d6" stroke-width="3.2" stroke-linejoin="round" stroke-linecap="round"/><path d="M1852.0 572.4 L1833.2 676.6" fill="none" stroke="#ecd9a6" stroke-width="5.2" stroke-linejoin="round" stroke-linecap="round"/><path d="M1852.0 572.4 L1833.2 676.6" fill="none" stroke="#fdf4d6" stroke-width="3.2" stroke-linejoin="round" stroke-linecap="round"/><path d="M1943.4 615.0 L1918.5 686.1 L1883.0 760.0 L1870.0 790.0" fill="none" stroke="#ecd9a6" stroke-width="5.2" stroke-linejoin="round" stroke-linecap="round"/><path d="M1943.4 615.0 L1918.5 686.1 L1883.0 760.0 L1870.0 790.0" fill="none" stroke="#fdf4d6" stroke-width="3.2" stroke-linejoin="round" stroke-linecap="round"/><path d="M1575.3 805.3 L1584.4 792.6 L1617.0 796.2 L1644.3 805.3 L1671.5 832.5" fill="none" stroke="#ecd9a6" stroke-width="5.2" stroke-linejoin="round" stroke-linecap="round"/><path d="M1575.3 805.3 L1584.4 792.6 L1617.0 796.2 L1644.3 805.3 L1671.5 832.5" fill="none" stroke="#fdf4d6" stroke-width="3.2" stroke-linejoin="round" stroke-linecap="round"/><path d="M1575.3 805.3 L1658.8 832.5 L1690.0 839.7 L1720.0 845.0" fill="none" stroke="#ecd9a6" stroke-width="5.2" stroke-linejoin="round" stroke-linecap="round"/><path d="M1575.3 805.3 L1658.8 832.5 L1690.0 839.7 L1720.0 845.0" fill="none" stroke="#fdf4d6" stroke-width="3.2" stroke-linejoin="round" stroke-linecap="round"/><path d="M1573.5 803.4 L1559.0 830.7 L1553.5 880.0 L1552.0 898.3 L1573.6 960.4 L1585.5 992.0" fill="none" stroke="#ecd9a6" stroke-width="5.2" stroke-linejoin="round" stroke-linecap="round"/><path d="M1573.5 803.4 L1559.0 830.7 L1553.5 880.0 L1552.0 898.3 L1573.6 960.4 L1585.5 992.0" fill="none" stroke="#fdf4d6" stroke-width="3.2" stroke-linejoin="round" stroke-linecap="round"/><path d="M1493.6 917.4 L1597.5 888.7 L1633.3 874.4" fill="none" stroke="#ecd9a6" stroke-width="5.2" stroke-linejoin="round" stroke-linecap="round"/><path d="M1493.6 917.4 L1597.5 888.7 L1633.3 874.4" fill="none" stroke="#fdf4d6" stroke-width="3.2" stroke-linejoin="round" stroke-linecap="round"/><path d="M1615.2 796.0 L1595.3 854.3 L1591.6 880.0" fill="none" stroke="#ecd9a6" stroke-width="5.2" stroke-linejoin="round" stroke-linecap="round"/><path d="M1615.2 796.0 L1595.3 854.3 L1591.6 880.0" fill="none" stroke="#fdf4d6" stroke-width="3.2" stroke-linejoin="round" stroke-linecap="round"/><path d="M1633.3 874.4 L1635.7 927.0 L1628.5 958.0" fill="none" stroke="#ecd9a6" stroke-width="5.2" stroke-linejoin="round" stroke-linecap="round"/><path d="M1633.3 874.4 L1635.7 927.0 L1628.5 958.0" fill="none" stroke="#fdf4d6" stroke-width="3.2" stroke-linejoin="round" stroke-linecap="round"/><path d="M1537.8 958.0 L1657.2 922.2 L1720.0 910.0" fill="none" stroke="#ecd9a6" stroke-width="5.2" stroke-linejoin="round" stroke-linecap="round"/><path d="M1537.8 958.0 L1657.2 922.2 L1720.0 910.0" fill="none" stroke="#fdf4d6" stroke-width="3.2" stroke-linejoin="round" stroke-linecap="round"/><path d="M1748.0 770.0 L1748.2 821.9 L1740.0 860.0" fill="none" stroke="#ecd9a6" stroke-width="5.2" stroke-linejoin="round" stroke-linecap="round"/><path d="M1748.0 770.0 L1748.2 821.9 L1740.0 860.0" fill="none" stroke="#fdf4d6" stroke-width="3.2" stroke-linejoin="round" stroke-linecap="round"/><path d="M1720.0 925.0 L1790.0 905.0 L1830.0 890.0 L1870.0 905.0 L1943.0 905.0" fill="none" stroke="#ecd9a6" stroke-width="5.2" stroke-linejoin="round" stroke-linecap="round"/><path d="M1720.0 925.0 L1790.0 905.0 L1830.0 890.0 L1870.0 905.0 L1943.0 905.0" fill="none" stroke="#fdf4d6" stroke-width="3.2" stroke-linejoin="round" stroke-linecap="round"/><path d="M1780.0 960.0 L1830.0 950.0 L1900.0 955.0" fill="none" stroke="#ecd9a6" stroke-width="5.2" stroke-linejoin="round" stroke-linecap="round"/><path d="M1780.0 960.0 L1830.0 950.0 L1900.0 955.0" fill="none" stroke="#fdf4d6" stroke-width="3.2" stroke-linejoin="round" stroke-linecap="round"/><path d="M1790.0 860.0 L1800.0 890.0 L1795.0 940.0 L1800.0 992.0" fill="none" stroke="#ecd9a6" stroke-width="5.2" stroke-linejoin="round" stroke-linecap="round"/><path d="M1790.0 860.0 L1800.0 890.0 L1795.0 940.0 L1800.0 992.0" fill="none" stroke="#fdf4d6" stroke-width="3.2" stroke-linejoin="round" stroke-linecap="round"/><path d="M1840.0 810.0 L1830.0 860.0 L1835.0 900.0" fill="none" stroke="#ecd9a6" stroke-width="5.2" stroke-linejoin="round" stroke-linecap="round"/><path d="M1840.0 810.0 L1830.0 860.0 L1835.0 900.0" fill="none" stroke="#fdf4d6" stroke-width="3.2" stroke-linejoin="round" stroke-linecap="round"/><path d="M1720.0 860.0 L1700.0 900.0 L1690.0 940.0 L1700.0 992.0" fill="none" stroke="#ecd9a6" stroke-width="5.2" stroke-linejoin="round" stroke-linecap="round"/><path d="M1720.0 860.0 L1700.0 900.0 L1690.0 940.0 L1700.0 992.0" fill="none" stroke="#fdf4d6" stroke-width="3.2" stroke-linejoin="round" stroke-linecap="round"/><path d="M1680.0 789.0 L1725.4 816.3 L1770.7 832.6 L1816.0 850.7 L1880.0 858.0" fill="none" stroke="#ecd9a6" stroke-width="5.2" stroke-linejoin="round" stroke-linecap="round"/><path d="M1680.0 789.0 L1725.4 816.3 L1770.7 832.6 L1816.0 850.7 L1880.0 858.0" fill="none" stroke="#fdf4d6" stroke-width="3.2" stroke-linejoin="round" stroke-linecap="round"/><path d="M1814.3 760.0 L1803.4 843.5 L1789.0 887.0 L1776.0 940.0 L1772.0 992.0" fill="none" stroke="#ecd9a6" stroke-width="5.2" stroke-linejoin="round" stroke-linecap="round"/><path d="M1814.3 760.0 L1803.4 843.5 L1789.0 887.0 L1776.0 940.0 L1772.0 992.0" fill="none" stroke="#fdf4d6" stroke-width="3.2" stroke-linejoin="round" stroke-linecap="round"/><path d="M1680.0 867.0 L1729.0 883.4 L1734.4 905.0" fill="none" stroke="#ecd9a6" stroke-width="5.2" stroke-linejoin="round" stroke-linecap="round"/><path d="M1680.0 867.0 L1729.0 883.4 L1734.4 905.0" fill="none" stroke="#fdf4d6" stroke-width="3.2" stroke-linejoin="round" stroke-linecap="round"/><path d="M1781.6 901.6 L1843.3 887.0 L1880.0 880.0" fill="none" stroke="#ecd9a6" stroke-width="5.2" stroke-linejoin="round" stroke-linecap="round"/><path d="M1781.6 901.6 L1843.3 887.0 L1880.0 880.0" fill="none" stroke="#fdf4d6" stroke-width="3.2" stroke-linejoin="round" stroke-linecap="round"/><path d="M1843.3 820.0 L1825.0 836.2 L1807.0 845.3" fill="none" stroke="#ecd9a6" stroke-width="5.2" stroke-linejoin="round" stroke-linecap="round"/><path d="M1843.3 820.0 L1825.0 836.2 L1807.0 845.3" fill="none" stroke="#fdf4d6" stroke-width="3.2" stroke-linejoin="round" stroke-linecap="round"/><path d="M1870.0 700.0 L1880.0 740.0 L1870.0 790.0" fill="none" stroke="#ecd9a6" stroke-width="5.2" stroke-linejoin="round" stroke-linecap="round"/><path d="M1870.0 700.0 L1880.0 740.0 L1870.0 790.0" fill="none" stroke="#fdf4d6" stroke-width="3.2" stroke-linejoin="round" stroke-linecap="round"/><path d="M1823.7 527.4 L1816.6 567.6 L1800.0 603.2 L1771.6 648.2 L1753.8 686.1 L1752.6 760.0 L1753.0 774.0" fill="none" stroke="#e7b54a" stroke-width="6.2" stroke-linejoin="round" stroke-linecap="round"/><path d="M1823.7 527.4 L1816.6 567.6 L1800.0 603.2 L1771.6 648.2 L1753.8 686.1 L1752.6 760.0 L1753.0 774.0" fill="none" stroke="#f7d06a" stroke-width="4.2" stroke-linejoin="round" stroke-linecap="round"/><path d="M1710.0 774.1 L1757.8 769.3 L1817.5 771.7 L1843.7 786.0 L1858.0 810.0 L1877.2 836.2 L1889.1 860.0 L1882.0 888.7 L1865.2 917.4 L1843.7 931.7 L1810.3 941.3 L1776.9 958.0 L1745.8 979.5 L1730.0 992.0" fill="none" stroke="#e7b54a" stroke-width="6.2" stroke-linejoin="round" stroke-linecap="round"/><path d="M1710.0 774.1 L1757.8 769.3 L1817.5 771.7 L1843.7 786.0 L1858.0 810.0 L1877.2 836.2 L1889.1 860.0 L1882.0 888.7 L1865.2 917.4 L1843.7 931.7 L1810.3 941.3 L1776.9 958.0 L1745.8 979.5 L1730.0 992.0" fill="none" stroke="#f7d06a" stroke-width="4.2" stroke-linejoin="round" stroke-linecap="round"/><path d="M1858.0 810.0 L1901.0 788.4 L1943.0 764.6" fill="none" stroke="#e7b54a" stroke-width="6.2" stroke-linejoin="round" stroke-linecap="round"/><path d="M1858.0 810.0 L1901.0 788.4 L1943.0 764.6" fill="none" stroke="#f7d06a" stroke-width="4.2" stroke-linejoin="round" stroke-linecap="round"/><path d="M1810.3 941.3 L1860.0 925.0 L1943.0 901.0" fill="none" stroke="#e7b54a" stroke-width="6.2" stroke-linejoin="round" stroke-linecap="round"/><path d="M1810.3 941.3 L1860.0 925.0 L1943.0 901.0" fill="none" stroke="#f7d06a" stroke-width="4.2" stroke-linejoin="round" stroke-linecap="round"/><path d="M1493.6 843.4 L1561.6 864.9 L1633.3 876.8 L1662.0 867.3 L1681.0 860.0" fill="none" stroke="#e7b54a" stroke-width="6.2" stroke-linejoin="round" stroke-linecap="round"/><path d="M1493.6 843.4 L1561.6 864.9 L1633.3 876.8 L1662.0 867.3 L1681.0 860.0" fill="none" stroke="#f7d06a" stroke-width="4.2" stroke-linejoin="round" stroke-linecap="round"/><path d="M1530.6 819.5 L1573.6 831.4 L1614.2 855.3 L1638.0 872.0" fill="none" stroke="#e7b54a" stroke-width="6.2" stroke-linejoin="round" stroke-linecap="round"/><path d="M1530.6 819.5 L1573.6 831.4 L1614.2 855.3 L1638.0 872.0" fill="none" stroke="#f7d06a" stroke-width="4.2" stroke-linejoin="round" stroke-linecap="round"/><path d="M1662.0 867.3 L1671.5 836.2 L1693.0 807.5 L1720.0 774.1" fill="none" stroke="#e7b54a" stroke-width="6.2" stroke-linejoin="round" stroke-linecap="round"/><path d="M1662.0 867.3 L1671.5 836.2 L1693.0 807.5 L1720.0 774.1" fill="none" stroke="#f7d06a" stroke-width="4.2" stroke-linejoin="round" stroke-linecap="round"/><path d="M1666.7 867.3 L1666.7 922.2 L1671.5 992.0" fill="none" stroke="#e7b54a" stroke-width="6.2" stroke-linejoin="round" stroke-linecap="round"/><path d="M1666.7 867.3 L1666.7 922.2 L1671.5 992.0" fill="none" stroke="#f7d06a" stroke-width="4.2" stroke-linejoin="round" stroke-linecap="round"/><path d="M1638.0 872.0 L1688.2 903.0 L1714.5 941.3 L1745.0 965.0 L1770.0 992.0" fill="none" stroke="#e7b54a" stroke-width="6.2" stroke-linejoin="round" stroke-linecap="round"/><path d="M1638.0 872.0 L1688.2 903.0 L1714.5 941.3 L1745.0 965.0 L1770.0 992.0" fill="none" stroke="#f7d06a" stroke-width="4.2" stroke-linejoin="round" stroke-linecap="round"/><path d="M1493.6 903.0 L1504.3 946.0 L1514.0 992.0" fill="none" stroke="#e7b54a" stroke-width="6.2" stroke-linejoin="round" stroke-linecap="round"/><path d="M1493.6 903.0 L1504.3 946.0 L1514.0 992.0" fill="none" stroke="#f7d06a" stroke-width="4.2" stroke-linejoin="round" stroke-linecap="round"/><path d="M1513.9 824.3 L1518.7 845.8" fill="none" stroke="#e7b54a" stroke-width="6.2" stroke-linejoin="round" stroke-linecap="round"/><path d="M1513.9 824.3 L1518.7 845.8" fill="none" stroke="#f7d06a" stroke-width="4.2" stroke-linejoin="round" stroke-linecap="round"/><path d="M1559.0 833.8 L1568.8 857.7 L1566.4 874.4" fill="none" stroke="#e7b54a" stroke-width="6.2" stroke-linejoin="round" stroke-linecap="round"/><path d="M1559.0 833.8 L1568.8 857.7 L1566.4 874.4" fill="none" stroke="#f7d06a" stroke-width="4.2" stroke-linejoin="round" stroke-linecap="round"/><path d="M1488.0 642.0 L1537.4 632.8 L1596.6 641.0 L1660.5 651.7 L1720.0 651.7 L1875.8 654.1 L1911.4 657.7 L1948.0 666.0" fill="none" stroke="#c48be6" stroke-width="7" stroke-linejoin="round"/><path d="M1946.0 668.0 L1943.4 676.6 L1920.0 720.0 L1902.0 755.0 L1901.0 768.0 L1908.2 786.0 L1925.0 817.1 L1934.5 850.5 L1932.0 898.3 L1920.2 946.0 L1908.2 992.0" fill="none" stroke="#b986dc" stroke-width="6.5" stroke-linejoin="round"/><path d="M1946.0 668.0 L1943.4 676.6 L1920.0 720.0 L1902.0 755.0 L1901.0 768.0 L1908.2 786.0 L1925.0 817.1 L1934.5 850.5 L1932.0 898.3 L1920.2 946.0 L1908.2 992.0" fill="none" stroke="#e3ccf3" stroke-width="3.5" stroke-linejoin="round"/><path d="M1512 814.7 L1531 820.7" stroke="#b27ee0" stroke-width="6"/><rect x="1494" y="803" width="20" height="13" rx="2" fill="#5b8fd8"/><text x="1504" y="813.5" font-size="9.5" font-weight="bold" fill="#fff" text-anchor="middle" font-family="Liberation Sans">68</text><rect x="1900.7" y="651.7" width="22.5" height="13" rx="2" fill="#5aa55a"/><text x="1912" y="662" font-size="9.5" font-weight="bold" fill="#fff" text-anchor="middle" font-family="Liberation Sans">90</text><text x="1816.6" y="549.8" font-size="11.5" fill="#94785f" text-anchor="start" font-weight="bold" font-family="Liberation Sans" >SAN GRE</text><text x="1816.6" y="602" font-size="12.5" fill="#8a796d" text-anchor="start" font-weight="normal" font-family="Liberation Sans" >Maz</text><text x="1873.5" y="605.5" font-size="12.5" fill="#8a796d" text-anchor="start" font-weight="normal" font-family="Liberation Sans" >Moncazarago</text><text x="1852" y="638" font-size="12.5" fill="#8a796d" text-anchor="middle" font-weight="normal" font-family="Liberation Sans" >Molino</text><text x="1852" y="652" font-size="12.5" fill="#8a796d" text-anchor="middle" font-weight="normal" font-family="Liberation Sans" >del</text><text x="1852" y="666" font-size="12.5" fill="#8a796d" text-anchor="middle" font-weight="normal" font-family="Liberation Sans" >Pilar</text><text x="1886.5" y="682" font-size="12.5" fill="#8a796d" text-anchor="middle" font-weight="normal" font-family="Liberation Sans" >Poligono</text><text x="1886.5" y="696" font-size="12.5" fill="#8a796d" text-anchor="middle" font-weight="normal" font-family="Liberation Sans" >Industrial</text><text x="1886.5" y="710" font-size="12.5" fill="#8a796d" text-anchor="middle" font-weight="normal" font-family="Liberation Sans" >Alcalde</text><text x="1886.5" y="724" font-size="12.5" fill="#8a796d" text-anchor="middle" font-weight="normal" font-family="Liberation Sans" >Caballero</text><text x="1847.4" y="739" font-size="12.5" fill="#8a796d" text-anchor="middle" font-weight="normal" font-family="Liberation Sans" >Poligono</text><text x="1847.4" y="753" font-size="12.5" fill="#8a796d" text-anchor="middle" font-weight="normal" font-family="Liberation Sans" >Industrial</text><text x="1847.4" y="767" font-size="12.5" fill="#8a796d" text-anchor="middle" font-weight="normal" font-family="Liberation Sans" >Cogullada</text><text x="1916" y="739" font-size="12.5" fill="#8a796d" text-anchor="start" font-weight="normal" font-family="Liberation Sans" >Polig</text><text x="1920" y="753" font-size="12.5" fill="#8a796d" text-anchor="start" font-weight="normal" font-family="Liberation Sans" >El P</text><text x="1561" y="774" font-size="11.5" fill="#8a796d" text-anchor="start" font-weight="normal" font-family="Liberation Sans" transform="rotate(-33 1561 774)" >Avenida Ranillas</text><text x="1699.5" y="853" font-size="20.8" fill="#3a3a3a" text-anchor="start" font-weight="normal" font-family="Liberation Sans" >Zaragoza</text><text x="1819" y="861" font-size="11.5" fill="#8a796d" text-anchor="start" font-weight="normal" font-family="Liberation Sans" transform="rotate(22.5 1819 861)" >Paseo de la Ribera</text><text x="1906" y="792" font-size="11.5" fill="#8a796d" text-anchor="start" font-weight="normal" font-family="Liberation Sans" transform="rotate(76 1906 792)" >Ronda Hispanidad</text><text x="1614" y="965" font-size="12.5" fill="#8a796d" text-anchor="middle" font-weight="normal" font-family="Liberation Sans" >Universidad</text><text x="1614" y="981" font-size="12.5" fill="#8a796d" text-anchor="middle" font-weight="normal" font-family="Liberation Sans" >de Zaragoza</text><text x="1614" y="994" font-size="12.5" fill="#8a796d" text-anchor="middle" font-weight="normal" font-family="Liberation Sans" >Campus</text><text x="1500" y="946" font-size="11.5" fill="#8a796d" text-anchor="start" font-weight="normal" font-family="Liberation Sans" transform="rotate(70 1500 946)" >Via Hispanidad</text><circle cx="1641.1" cy="699.8" r="7.5" fill="#55c2b1" stroke="#239a88" stroke-width="1.3"/><circle cx="1770.4" cy="692.7" r="7.5" fill="#55c2b1" stroke="#239a88" stroke-width="1.3"/><circle cx="1614.2" cy="813.5" r="7.5" fill="#55c2b1" stroke="#239a88" stroke-width="1.3"/><circle cx="1598.7" cy="888.7" r="7.5" fill="#55c2b1" stroke="#239a88" stroke-width="1.3"/><circle cx="1695" cy="878" r="7.5" fill="#55c2b1" stroke="#239a88" stroke-width="1.3"/><circle cx="1715.7" cy="905.5" r="7.5" fill="#55c2b1" stroke="#239a88" stroke-width="1.3"/><circle cx="1535.9" cy="963.5" r="7.5" fill="#55c2b1" stroke="#239a88" stroke-width="1.3"/><circle cx="1553.3" cy="984.3" r="7.5" fill="#55c2b1" stroke="#239a88" stroke-width="1.3"/><circle cx="1604.6" cy="972.8" r="7.5" fill="#55c2b1" stroke="#239a88" stroke-width="1.3"/><circle cx="1598.7" cy="980.7" r="7.5" fill="#55c2b1" stroke="#239a88" stroke-width="1.3"/><circle cx="1662" cy="987.9" r="7.5" fill="#55c2b1" stroke="#239a88" stroke-width="1.3"/><circle cx="1757.8" cy="864.9" r="7.5" fill="#55c2b1" stroke="#239a88" stroke-width="1.3"/><circle cx="1764.4" cy="863.7" r="7.5" fill="#55c2b1" stroke="#239a88" stroke-width="1.3"/><circle cx="1761.3" cy="862" r="7.5" fill="#55c2b1" stroke="#239a88" stroke-width="1.3"/><circle cx="1774" cy="873.2" r="7.5" fill="#55c2b1" stroke="#239a88" stroke-width="1.3"/><circle cx="1754.2" cy="891.1" r="7.5" fill="#55c2b1" stroke="#239a88" stroke-width="1.3"/><circle cx="1727.9" cy="921" r="7.5" fill="#55c2b1" stroke="#239a88" stroke-width="1.3"/><circle cx="1727.2" cy="935.8" r="7.5" fill="#55c2b1" stroke="#239a88" stroke-width="1.3"/><circle cx="1762.1" cy="919.8" r="7.5" fill="#55c2b1" stroke="#239a88" stroke-width="1.3"/><circle cx="1830.6" cy="911" r="7.5" fill="#55c2b1" stroke="#239a88" stroke-width="1.3"/><circle cx="1831.1" cy="929.8" r="7.5" fill="#55c2b1" stroke="#239a88" stroke-width="1.3"/><circle cx="1885.3" cy="554.7" r="19" fill="#ffffff" fill-opacity="0.75" stroke="#333" stroke-width="2"/><path d="M1875 554.7 H1895.5 M1885.3 544.5 V565" stroke="#333" stroke-width="2.2"/><circle cx="1885.3" cy="618.1" r="19" fill="#ffffff" fill-opacity="0.75" stroke="#333" stroke-width="2"/><path d="M1875 618.1 H1895.5" stroke="#333" stroke-width="2.2"/><path d="M1498 964 L1502 965.5 L1502 976 L1508.5 972.5 L1506 970.5 L1503.5 969.5 L1511.5 972 L1511.5 975.5 L1502 981.5 L1498 979 Z" fill="#1b1b1b"/><text x="1515.5" y="980.5" font-size="17" fill="#2a2a2a" text-anchor="start" font-weight="normal" font-family="Liberation Sans" >Bing</text><text x="1648.8" y="987" font-size="11.3" fill="#333" text-anchor="start" font-weight="normal" font-family="Liberation Sans" letter-spacing="-0.2">© 2021 TomTom, © 2021 Microsoft Corporation</text><text x="1884.3" y="987" font-size="11.3" fill="#3a5ec8" text-anchor="start" font-weight="normal" font-family="Liberation Sans" text-decoration="underline">Terms</text></svg>
</body></html>
